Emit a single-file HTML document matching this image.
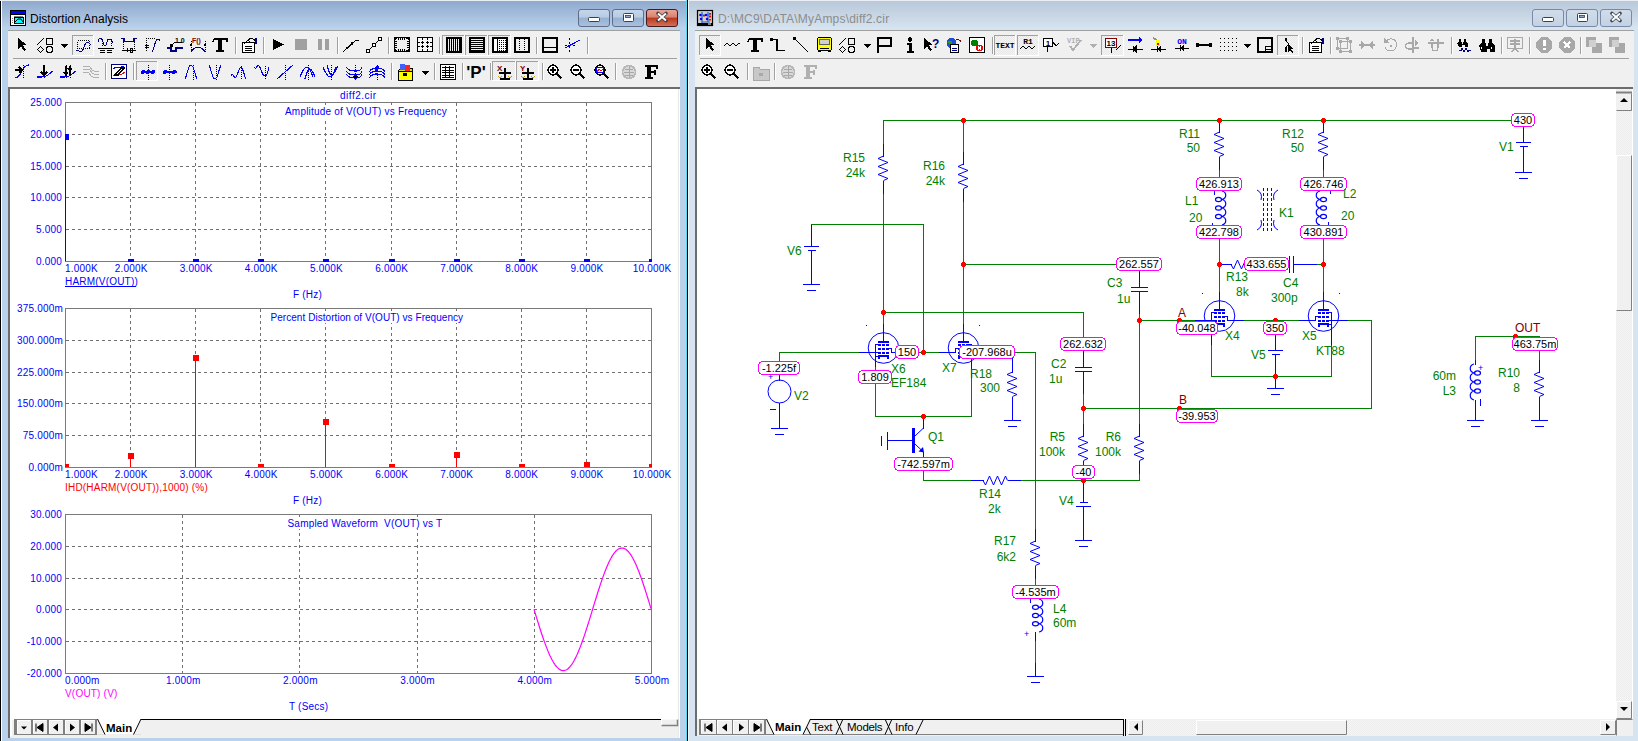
<!DOCTYPE html>
<html><head><meta charset="utf-8">
<style>
*{margin:0;padding:0;box-sizing:border-box}
html,body{width:1638px;height:741px;overflow:hidden;background:#fff;font-family:"Liberation Sans",sans-serif}
.abs{position:absolute}
#lw{left:0;top:0;width:688px;height:741px;background:linear-gradient(#f4f6fa 0px,#f4f6fa 1px,#8fa9cd 1px,#a4bcdc 14px,#bcd3ec 29px,#b9d1ea 30px,#b9d1ea 100%);border-left:1px solid #000}
#rw{left:688px;top:0;width:950px;height:741px;background:linear-gradient(#eaedf4 0px,#eaedf4 1px,#b9c9da 1px,#c6d4e3 14px,#d7e5f2 29px,#d6e4f2 30px,#d6e4f2 100%)}
.title{font-size:12.5px;color:#000;top:11px}
.tb{background:#f0f0f0;border-top:1px solid #a0a0a0}
.client{background:#fff;border-left:2px solid #6d6d6d;border-top:2px solid #6d6d6d}
.wbtn{width:32px;height:18px;border:1px solid #5f6e86;border-radius:3px;background:linear-gradient(#c5d6ec,#b7cbe4 45%,#98b0d0 50%,#a9c1df)}
</style></head><body>
<!-- LEFT WINDOW -->
<div id="lw" class="abs"></div>
<div class="abs" style="left:0;top:0;width:688px;height:1px;background:#e8eef5"></div>
<div class="abs" style="left:1px;top:1px;width:1px;height:740px;background:#fff"></div>
<div class="abs" style="left:686px;top:0;width:1px;height:741px;background:#5ad8f0"></div>
<div class="abs" style="left:687px;top:0;width:1px;height:741px;background:#000"></div>
<div class="abs wbtn" style="left:578px;top:9px"></div>
<div class="abs wbtn" style="left:612px;top:9px"></div>
<div class="abs wbtn" style="left:646px;top:9px;border-color:#4a1a1a;background:linear-gradient(#e9a594,#d9826e 45%,#b8371c 50%,#d3705a)"></div>
<div class="abs tb" style="left:8px;top:30px;width:672px;height:58px"></div>
<div class="abs" style="left:13px;top:58px;width:664px;height:1px;background:#a0a0a0"></div>
<div class="abs client" style="left:8px;top:87px;width:672px;height:651px"></div><div class="abs" style="left:678px;top:89px;width:1px;height:649px;background:#e8e8e8"></div>

<!-- RIGHT WINDOW -->
<div id="rw" class="abs"></div>
<div class="abs" style="left:688px;top:0;width:1px;height:741px;background:#f4f8fc"></div>
<div class="abs wbtn" style="left:1532px;top:9px;border-color:#7a8aa6;background:linear-gradient(#d0dcea,#c3d2e3)"></div>
<div class="abs wbtn" style="left:1566px;top:9px;border-color:#7a8aa6;background:linear-gradient(#d0dcea,#c3d2e3)"></div>
<div class="abs wbtn" style="left:1600px;top:9px;border-color:#7a8aa6;background:linear-gradient(#d0dcea,#c3d2e3)"></div>
<div class="abs tb" style="left:695px;top:30px;width:939px;height:58px"></div>
<div class="abs" style="left:700px;top:58px;width:929px;height:1px;background:#a0a0a0"></div>
<div class="abs client" style="left:695px;top:87px;width:938px;height:649px"></div>

<svg class="abs" style="left:0;top:0" width="1638" height="741" viewBox="0 0 1638 741" font-family="Liberation Sans" font-size="10">
<style>.g{stroke:#707070;stroke-dasharray:3 3;stroke-width:1}.fr{fill:none;stroke:#7a7a7a;stroke-width:1}</style>
<g fill="#0000ff" letter-spacing="0.2" font-size="10">
<line x1="130.5" y1="103" x2="130.5" y2="261" class="g"/>
<line x1="195.5" y1="103" x2="195.5" y2="261" class="g"/>
<line x1="260.5" y1="103" x2="260.5" y2="261" class="g"/>
<line x1="325.5" y1="103" x2="325.5" y2="261" class="g"/>
<line x1="391.5" y1="103" x2="391.5" y2="261" class="g"/>
<line x1="456.5" y1="103" x2="456.5" y2="261" class="g"/>
<line x1="521.5" y1="103" x2="521.5" y2="261" class="g"/>
<line x1="586.5" y1="103" x2="586.5" y2="261" class="g"/>
<line x1="66" y1="134.5" x2="651" y2="134.5" class="g"/>
<line x1="66" y1="166.5" x2="651" y2="166.5" class="g"/>
<line x1="66" y1="197.5" x2="651" y2="197.5" class="g"/>
<line x1="66" y1="229.5" x2="651" y2="229.5" class="g"/>
<rect x="65.5" y="102.5" width="586" height="159" class="fr"/>
<text x="62" y="106" text-anchor="end">25.000</text>
<text x="62" y="138" text-anchor="end">20.000</text>
<text x="62" y="170" text-anchor="end">15.000</text>
<text x="62" y="201" text-anchor="end">10.000</text>
<text x="62" y="233" text-anchor="end">5.000</text>
<text x="62" y="265" text-anchor="end">0.000</text>
<text x="65" y="272">1.000K</text>
<text x="131.1" y="272" text-anchor="middle">2.000K</text>
<text x="196.2" y="272" text-anchor="middle">3.000K</text>
<text x="261.3" y="272" text-anchor="middle">4.000K</text>
<text x="326.4" y="272" text-anchor="middle">5.000K</text>
<text x="391.6" y="272" text-anchor="middle">6.000K</text>
<text x="456.7" y="272" text-anchor="middle">7.000K</text>
<text x="521.8" y="272" text-anchor="middle">8.000K</text>
<text x="586.9" y="272" text-anchor="middle">9.000K</text>
<text x="652.0" y="272" text-anchor="middle">10.000K</text>
<text x="340" y="99" letter-spacing="0.5">diff2.cir</text>
<rect x="283" y="105" width="168" height="15" fill="#fff"/><text x="285" y="115">Amplitude of V(OUT) vs Frequency</text>
<text x="65" y="285">HARM(V(OUT))</text><line x1="65" y1="286.5" x2="136" y2="286.5" stroke="#00f"/>
<text x="293" y="298">F (Hz)</text>
<rect x="65" y="137" width="1" height="124" fill="#00f"/><rect x="65" y="134" width="4" height="6" fill="#00f"/>
<rect x="128" y="259" width="6" height="3" fill="#00f"/>
<rect x="193" y="259" width="6" height="3" fill="#00f"/>
<rect x="258" y="259" width="6" height="3" fill="#00f"/>
<rect x="323" y="259" width="6" height="3" fill="#00f"/>
<rect x="389" y="259" width="6" height="3" fill="#00f"/>
<rect x="454" y="259" width="6" height="3" fill="#00f"/>
<rect x="519" y="259" width="6" height="3" fill="#00f"/>
<rect x="584" y="259" width="6" height="3" fill="#00f"/>
<rect x="649" y="259" width="3" height="3" fill="#00f"/>
<line x1="130.5" y1="309" x2="130.5" y2="467" class="g"/>
<line x1="195.5" y1="309" x2="195.5" y2="467" class="g"/>
<line x1="260.5" y1="309" x2="260.5" y2="467" class="g"/>
<line x1="325.5" y1="309" x2="325.5" y2="467" class="g"/>
<line x1="391.5" y1="309" x2="391.5" y2="467" class="g"/>
<line x1="456.5" y1="309" x2="456.5" y2="467" class="g"/>
<line x1="521.5" y1="309" x2="521.5" y2="467" class="g"/>
<line x1="586.5" y1="309" x2="586.5" y2="467" class="g"/>
<line x1="66" y1="340.5" x2="651" y2="340.5" class="g"/>
<line x1="66" y1="372.5" x2="651" y2="372.5" class="g"/>
<line x1="66" y1="403.5" x2="651" y2="403.5" class="g"/>
<line x1="66" y1="435.5" x2="651" y2="435.5" class="g"/>
<rect x="65.5" y="308.5" width="586" height="159" class="fr"/>
<text x="63" y="312" text-anchor="end">375.000m</text>
<text x="63" y="344" text-anchor="end">300.000m</text>
<text x="63" y="376" text-anchor="end">225.000m</text>
<text x="63" y="407" text-anchor="end">150.000m</text>
<text x="63" y="439" text-anchor="end">75.000m</text>
<text x="63" y="471" text-anchor="end">0.000m</text>
<text x="65" y="478">1.000K</text>
<text x="131.1" y="478" text-anchor="middle">2.000K</text>
<text x="196.2" y="478" text-anchor="middle">3.000K</text>
<text x="261.3" y="478" text-anchor="middle">4.000K</text>
<text x="326.4" y="478" text-anchor="middle">5.000K</text>
<text x="391.6" y="478" text-anchor="middle">6.000K</text>
<text x="456.7" y="478" text-anchor="middle">7.000K</text>
<text x="521.8" y="478" text-anchor="middle">8.000K</text>
<text x="586.9" y="478" text-anchor="middle">9.000K</text>
<text x="652.0" y="478" text-anchor="middle">10.000K</text>
<rect x="268" y="311" width="201" height="12" fill="#fff"/><text x="270.5" y="321" letter-spacing="0.05">Percent Distortion of V(OUT) vs Frequency</text>
<text x="65" y="491" fill="#f00">IHD(HARM(V(OUT)),1000) (%)</text>
<text x="293" y="504">F (Hz)</text>
<rect x="65" y="464" width="4" height="3" fill="#f00"/>
<rect x="130" y="456" width="1" height="11" fill="#f00"/>
<rect x="128" y="453" width="6" height="6" fill="#f00"/>
<rect x="195" y="358" width="1" height="109" fill="#f00"/>
<rect x="193" y="355" width="6" height="6" fill="#f00"/>
<rect x="258" y="464" width="6" height="3" fill="#f00"/>
<rect x="325" y="422" width="1" height="45" fill="#f00"/>
<rect x="323" y="419" width="6" height="6" fill="#f00"/>
<rect x="389" y="464" width="6" height="3" fill="#f00"/>
<rect x="456" y="455" width="1" height="12" fill="#f00"/>
<rect x="454" y="452" width="6" height="6" fill="#f00"/>
<rect x="519" y="464" width="6" height="3" fill="#f00"/>
<rect x="584" y="462" width="6" height="5" fill="#f00"/>
<rect x="649" y="464" width="3" height="3" fill="#f00"/>
<line x1="182.5" y1="515" x2="182.5" y2="673" class="g"/>
<line x1="299.5" y1="515" x2="299.5" y2="673" class="g"/>
<line x1="417.5" y1="515" x2="417.5" y2="673" class="g"/>
<line x1="534.5" y1="515" x2="534.5" y2="673" class="g"/>
<line x1="66" y1="546.5" x2="651" y2="546.5" class="g"/>
<line x1="66" y1="578.5" x2="651" y2="578.5" class="g"/>
<line x1="66" y1="609.5" x2="651" y2="609.5" class="g"/>
<line x1="66" y1="641.5" x2="651" y2="641.5" class="g"/>
<rect x="65.5" y="514.5" width="586" height="159" class="fr"/>
<text x="62" y="518" text-anchor="end">30.000</text>
<text x="62" y="550" text-anchor="end">20.000</text>
<text x="62" y="582" text-anchor="end">10.000</text>
<text x="62" y="613" text-anchor="end">0.000</text>
<text x="62" y="645" text-anchor="end">-10.000</text>
<text x="62" y="677" text-anchor="end">-20.000</text>
<text x="65" y="684">0.000m</text>
<text x="183.2" y="684" text-anchor="middle">1.000m</text>
<text x="300.4" y="684" text-anchor="middle">2.000m</text>
<text x="417.6" y="684" text-anchor="middle">3.000m</text>
<text x="534.8" y="684" text-anchor="middle">4.000m</text>
<text x="652.0" y="684" text-anchor="middle">5.000m</text>
<rect x="285" y="517" width="160" height="12" fill="#fff"/><text x="287.5" y="527">Sampled Waveform&#160; V(OUT) vs T</text>
<text x="65" y="697" fill="#f0f">V(OUT) (V)</text>
<text x="289" y="710">T (Secs)</text>
<polyline points="534,609.3 535,612.6 536,615.9 537,619.1 538,622.3 539,625.5 540,628.7 541,631.8 542,634.8 543,637.7 544,640.6 545,643.4 546,646.1 547,648.6 548,651.1 549,653.5 550,655.7 551,657.7 552,659.7 553,661.5 554,663.1 555,664.6 556,666.0 557,667.1 558,668.1 559,669.0 560,669.6 561,670.1 562,670.5 563,670.6 564,670.6 565,670.3 566,670.0 567,669.4 568,668.7 569,667.8 570,666.7 571,665.5 572,664.1 573,662.5 574,660.8 575,658.9 576,656.9 577,654.8 578,652.5 579,650.1 580,647.6 581,645.0 582,642.3 583,639.5 584,636.6 585,633.6 586,630.5 587,627.4 588,624.3 589,621.1 590,617.8 591,614.6 592,611.3 593,608.0 594,604.7 595,601.4 596,598.2 597,595.0 598,591.8 599,588.7 600,585.6 601,582.6 602,579.7 603,576.9 604,574.1 605,571.5 606,569.0 607,566.5 608,564.2 609,562.1 610,560.1 611,558.2 612,556.4 613,554.8 614,553.4 615,552.1 616,551.0 617,550.1 618,549.3 619,548.7 620,548.3 621,548.1 622,548.0 623,548.1 624,548.4 625,548.8 626,549.5 627,550.3 628,551.2 629,552.4 630,553.7 631,555.2 632,556.8 633,558.5 634,560.5 635,562.5 636,564.7 637,567.0 638,569.5 639,572.0 640,574.7 641,577.4 642,580.3 643,583.2 644,586.2 645,589.3 646,592.4 647,595.6 648,598.8 649,602.1 650,605.4 651,608.6" fill="none" stroke="#f0f" stroke-width="1.2"/>
</g>
<g font-family="Liberation Sans"><rect x="883" y="120" width="629" height="1" fill="#008000"/>
<rect x="883" y="120" width="1" height="25" fill="#008000"/>
<rect x="963" y="120" width="1" height="33" fill="#008000"/>
<rect x="963" y="201" width="1" height="124" fill="#008000"/>
<rect x="883" y="193" width="1" height="132" fill="#008000"/>
<rect x="811" y="224" width="113" height="1" fill="#008000"/>
<rect x="923" y="224" width="1" height="129" fill="#008000"/>
<rect x="883" y="312" width="201" height="1" fill="#008000"/>
<rect x="1083" y="312" width="1" height="27" fill="#008000"/>
<rect x="779" y="352" width="81" height="1" fill="#008000"/>
<rect x="779" y="352" width="1" height="11" fill="#008000"/>
<rect x="779" y="374" width="1" height="7" fill="#008000"/>
<rect x="918" y="352" width="22" height="1" fill="#008000"/>
<rect x="1015" y="352" width="21" height="1" fill="#008000"/>
<rect x="1035" y="352" width="1" height="177" fill="#008000"/>
<rect x="875" y="367" width="1" height="50" fill="#008000"/>
<rect x="875" y="416" width="97" height="1" fill="#008000"/>
<rect x="971" y="369" width="1" height="48" fill="#008000"/>
<rect x="923" y="416" width="1" height="13" fill="#008000"/>
<rect x="923" y="470" width="1" height="11" fill="#008000"/>
<rect x="923" y="480" width="49" height="1" fill="#008000"/>
<rect x="1020" y="480" width="120" height="1" fill="#008000"/>
<rect x="963" y="264" width="154" height="1" fill="#008000"/>
<rect x="1083" y="392" width="1" height="33" fill="#008000"/>
<rect x="1083" y="408" width="289" height="1" fill="#008000"/>
<rect x="1139" y="313" width="1" height="112" fill="#008000"/>
<rect x="1139" y="473" width="1" height="8" fill="#008000"/>
<rect x="1139" y="320" width="57" height="1" fill="#008000"/>
<rect x="1243" y="320" width="57" height="1" fill="#008000"/>
<rect x="1347" y="320" width="25" height="1" fill="#008000"/>
<rect x="1371" y="320" width="1" height="89" fill="#008000"/>
<rect x="1211" y="345" width="1" height="32" fill="#008000"/>
<rect x="1211" y="376" width="121" height="1" fill="#008000"/>
<rect x="1331" y="344" width="1" height="33" fill="#008000"/>
<rect x="1219" y="120" width="1" height="1" fill="#008000"/>
<rect x="1219" y="168" width="1" height="11" fill="#008000"/>
<rect x="1219" y="238" width="1" height="59" fill="#008000"/>
<rect x="1323" y="168" width="1" height="11" fill="#008000"/>
<rect x="1323" y="238" width="1" height="59" fill="#008000"/>
<rect x="1316" y="264" width="8" height="1" fill="#008000"/>
<rect x="1035" y="578" width="1" height="9" fill="#008000"/>
<rect x="1035" y="640" width="1" height="24" fill="#008000"/>
<rect x="1475" y="336" width="65" height="1" fill="#008000"/>
<rect x="1475" y="336" width="1" height="25" fill="#008000"/>
<rect x="1539" y="350" width="1" height="11" fill="#008000"/>
<rect x="883" y="144" width="1" height="13" fill="#0000ff"/>
<polyline points="883.5,156 878,158.5 888,162.5 878,166.5 888,170.5 878,174.5 888,178.5 883.5,180.5" fill="none" stroke="#0000ff" stroke-width="1"/>
<rect x="883" y="181" width="1" height="13" fill="#0000ff"/>
<rect x="963" y="152" width="1" height="13" fill="#0000ff"/>
<polyline points="963.5,164 958,166.5 968,170.5 958,174.5 968,178.5 958,182.5 968,186.5 963.5,188.5" fill="none" stroke="#0000ff" stroke-width="1"/>
<rect x="963" y="189" width="1" height="13" fill="#0000ff"/>
<rect x="1219" y="120" width="1" height="13" fill="#0000ff"/>
<polyline points="1219.5,132 1214,134.5 1224,138.5 1214,142.5 1224,146.5 1214,150.5 1224,154.5 1219.5,156.5" fill="none" stroke="#0000ff" stroke-width="1"/>
<rect x="1219" y="157" width="1" height="13" fill="#0000ff"/>
<rect x="1323" y="120" width="1" height="13" fill="#0000ff"/>
<polyline points="1323.5,132 1318,134.5 1328,138.5 1318,142.5 1328,146.5 1318,150.5 1328,154.5 1323.5,156.5" fill="none" stroke="#0000ff" stroke-width="1"/>
<rect x="1323" y="157" width="1" height="13" fill="#0000ff"/>
<rect x="1012" y="360" width="1" height="13" fill="#0000ff"/>
<polyline points="1012.5,372 1007,374.5 1017,378.5 1007,382.5 1017,386.5 1007,390.5 1017,394.5 1012.5,396.5" fill="none" stroke="#0000ff" stroke-width="1"/>
<rect x="1012" y="397" width="1" height="13" fill="#0000ff"/>
<rect x="1012" y="358" width="1" height="3" fill="#0000ff"/>
<rect x="1012" y="408" width="1" height="13" fill="#0000ff"/>
<rect x="1004" y="420" width="17" height="1" fill="#0000ff"/>
<rect x="1008" y="426" width="9" height="1" fill="#0000ff"/>
<rect x="1083" y="424" width="1" height="13" fill="#0000ff"/>
<polyline points="1083.5,436 1078,438.5 1088,442.5 1078,446.5 1088,450.5 1078,454.5 1088,458.5 1083.5,460.5" fill="none" stroke="#0000ff" stroke-width="1"/>
<rect x="1083" y="461" width="1" height="13" fill="#0000ff"/>
<rect x="1139" y="424" width="1" height="13" fill="#0000ff"/>
<polyline points="1139.5,436 1134,438.5 1144,442.5 1134,446.5 1144,450.5 1134,454.5 1144,458.5 1139.5,460.5" fill="none" stroke="#0000ff" stroke-width="1"/>
<rect x="1139" y="461" width="1" height="13" fill="#0000ff"/>
<rect x="1035" y="529" width="1" height="13" fill="#0000ff"/>
<polyline points="1035.5,541 1030,543.5 1040,547.5 1030,551.5 1040,555.5 1030,559.5 1040,563.5 1035.5,565.5" fill="none" stroke="#0000ff" stroke-width="1"/>
<rect x="1035" y="566" width="1" height="13" fill="#0000ff"/>
<rect x="1539" y="360" width="1" height="13" fill="#0000ff"/>
<polyline points="1539.5,372 1534,374.5 1544,378.5 1534,382.5 1544,386.5 1534,390.5 1544,394.5 1539.5,396.5" fill="none" stroke="#0000ff" stroke-width="1"/>
<rect x="1539" y="397" width="1" height="13" fill="#0000ff"/>
<rect x="1539" y="409" width="1" height="12" fill="#0000ff"/>
<rect x="1531" y="420" width="17" height="1" fill="#0000ff"/>
<rect x="1535" y="426" width="9" height="1" fill="#0000ff"/>
<rect x="971" y="480" width="13" height="1" fill="#0000ff"/>
<polyline points="983,480.5 985.5,485 989.5,476 993.5,485 997.5,476 1001.5,485 1005.5,476 1007.5,480.5" fill="none" stroke="#0000ff" stroke-width="1"/>
<rect x="1008" y="480" width="13" height="1" fill="#0000ff"/>
<rect x="1219" y="264" width="13" height="1" fill="#0000ff"/>
<polyline points="1231,264.5 1233.5,269 1237.5,260 1241.5,269 1245.5,260 1249.5,269 1253.5,260 1255.5,264.5" fill="none" stroke="#0000ff" stroke-width="1"/>
<rect x="1256" y="264" width="13" height="1" fill="#0000ff"/>
<rect x="1139" y="270" width="1" height="18" fill="#0000ff"/>
<rect x="1131" y="287" width="17" height="1" fill="#0000ff"/>
<rect x="1131" y="291" width="17" height="1" fill="#0000ff"/>
<rect x="1139" y="291" width="1" height="23" fill="#0000ff"/>
<rect x="1083" y="350" width="1" height="18" fill="#0000ff"/>
<rect x="1075" y="367" width="17" height="1" fill="#0000ff"/>
<rect x="1075" y="371" width="17" height="1" fill="#0000ff"/>
<rect x="1083" y="371" width="1" height="23" fill="#0000ff"/>
<rect x="1289" y="256" width="1" height="17" fill="#0000ff"/>
<rect x="1293" y="256" width="1" height="17" fill="#0000ff"/>
<rect x="1293" y="264" width="24" height="1" fill="#0000ff"/>
<rect x="811" y="225" width="1" height="22" fill="#0000ff"/>
<rect x="804" y="246" width="15" height="1" fill="#0000ff"/>
<rect x="808" y="250" width="8" height="1" fill="#0000ff"/>
<rect x="811" y="250" width="1" height="35" fill="#0000ff"/>
<rect x="803" y="284" width="17" height="1" fill="#0000ff"/>
<rect x="807" y="290" width="9" height="1" fill="#0000ff"/>
<rect x="1523" y="126" width="1" height="17" fill="#0000ff"/>
<rect x="1516" y="142" width="15" height="1" fill="#0000ff"/>
<rect x="1520" y="146" width="8" height="1" fill="#0000ff"/>
<rect x="1523" y="146" width="1" height="27" fill="#0000ff"/>
<rect x="1515" y="172" width="17" height="1" fill="#0000ff"/>
<rect x="1519" y="178" width="9" height="1" fill="#0000ff"/>
<rect x="1275" y="334" width="1" height="17" fill="#0000ff"/>
<rect x="1268" y="350" width="15" height="1" fill="#0000ff"/>
<rect x="1272" y="354" width="8" height="1" fill="#0000ff"/>
<rect x="1275" y="354" width="1" height="35" fill="#0000ff"/>
<rect x="1267" y="388" width="17" height="1" fill="#0000ff"/>
<rect x="1271" y="394" width="9" height="1" fill="#0000ff"/>
<rect x="1083" y="480" width="1" height="23" fill="#0000ff"/>
<rect x="1080" y="502" width="8" height="1" fill="#0000ff"/>
<rect x="1076" y="506" width="15" height="1" fill="#0000ff"/>
<rect x="1083" y="506" width="1" height="35" fill="#0000ff"/>
<rect x="1075" y="540" width="17" height="1" fill="#0000ff"/>
<rect x="1079" y="546" width="9" height="1" fill="#0000ff"/>
<circle cx="779.5" cy="391.5" r="11.5" fill="none" stroke="#0000ff" stroke-width="1"/>
<rect x="779" y="374" width="1" height="7" fill="#0000ff"/>
<rect x="779" y="403" width="1" height="26" fill="#0000ff"/>
<rect x="771" y="428" width="17" height="1" fill="#0000ff"/>
<rect x="775" y="434" width="9" height="1" fill="#0000ff"/>
<text x="768" y="380" fill="#0000ff" font-size="9">+</text>
<rect x="770" y="409" width="6" height="1" fill="#0000ff"/>
<g transform=""><circle cx="883.5" cy="348" r="15.3" fill="none" stroke="#0000ff" stroke-width="1"/><rect x="883" y="324" width="1" height="18" fill="#0000ff"/><rect x="878" y="341" width="11" height="2" fill="#0000ff"/><rect x="878" y="344" width="3" height="2" fill="#0000ff"/><rect x="882" y="344" width="3" height="2" fill="#0000ff"/><rect x="886" y="344" width="3" height="2" fill="#0000ff"/><rect x="878" y="348" width="3" height="2" fill="#0000ff"/><rect x="882" y="348" width="3" height="2" fill="#0000ff"/><rect x="886" y="348" width="3" height="2" fill="#0000ff"/><rect x="878" y="352" width="3" height="2" fill="#0000ff"/><rect x="882" y="352" width="3" height="2" fill="#0000ff"/><rect x="886" y="352" width="3" height="2" fill="#0000ff"/><rect x="878" y="355" width="11" height="2" fill="#0000ff"/><rect x="878" y="357" width="2" height="2" fill="#0000ff"/><rect x="887" y="357" width="2" height="2" fill="#0000ff"/><rect x="875" y="344" width="1" height="23" fill="#0000ff"/><rect x="875" y="344" width="3" height="1" fill="#0000ff"/><rect x="875" y="356" width="3" height="1" fill="#0000ff"/><rect x="859" y="352" width="19" height="1" fill="#0000ff"/><rect x="889" y="348" width="3" height="1" fill="#0000ff"/><rect x="891" y="348" width="1" height="5" fill="#0000ff"/><rect x="891" y="352" width="17" height="1" fill="#0000ff"/></g>
<g transform="translate(1927,0) scale(-1,1)"><circle cx="963.5" cy="348" r="15.3" fill="none" stroke="#0000ff" stroke-width="1"/><rect x="963" y="324" width="1" height="18" fill="#0000ff"/><rect x="958" y="341" width="11" height="2" fill="#0000ff"/><rect x="958" y="344" width="3" height="2" fill="#0000ff"/><rect x="962" y="344" width="3" height="2" fill="#0000ff"/><rect x="966" y="344" width="3" height="2" fill="#0000ff"/><rect x="958" y="348" width="3" height="2" fill="#0000ff"/><rect x="962" y="348" width="3" height="2" fill="#0000ff"/><rect x="966" y="348" width="3" height="2" fill="#0000ff"/><rect x="958" y="352" width="3" height="2" fill="#0000ff"/><rect x="962" y="352" width="3" height="2" fill="#0000ff"/><rect x="966" y="352" width="3" height="2" fill="#0000ff"/><rect x="958" y="355" width="11" height="2" fill="#0000ff"/><rect x="958" y="357" width="2" height="2" fill="#0000ff"/><rect x="967" y="357" width="2" height="2" fill="#0000ff"/><rect x="955" y="344" width="1" height="25" fill="#0000ff"/><rect x="955" y="344" width="3" height="1" fill="#0000ff"/><rect x="955" y="356" width="3" height="1" fill="#0000ff"/><rect x="939" y="352" width="19" height="1" fill="#0000ff"/><rect x="969" y="348" width="3" height="1" fill="#0000ff"/><rect x="971" y="348" width="1" height="5" fill="#0000ff"/><rect x="971" y="352" width="17" height="1" fill="#0000ff"/></g>
<g transform=""><circle cx="1219.5" cy="316" r="15.3" fill="none" stroke="#0000ff" stroke-width="1"/><rect x="1219" y="292" width="1" height="18" fill="#0000ff"/><rect x="1214" y="309" width="11" height="2" fill="#0000ff"/><rect x="1214" y="312" width="3" height="2" fill="#0000ff"/><rect x="1218" y="312" width="3" height="2" fill="#0000ff"/><rect x="1222" y="312" width="3" height="2" fill="#0000ff"/><rect x="1214" y="316" width="3" height="2" fill="#0000ff"/><rect x="1218" y="316" width="3" height="2" fill="#0000ff"/><rect x="1222" y="316" width="3" height="2" fill="#0000ff"/><rect x="1214" y="320" width="3" height="2" fill="#0000ff"/><rect x="1218" y="320" width="3" height="2" fill="#0000ff"/><rect x="1222" y="320" width="3" height="2" fill="#0000ff"/><rect x="1214" y="323" width="11" height="2" fill="#0000ff"/><rect x="1214" y="325" width="2" height="2" fill="#0000ff"/><rect x="1223" y="325" width="2" height="2" fill="#0000ff"/><rect x="1211" y="312" width="1" height="33" fill="#0000ff"/><rect x="1211" y="312" width="3" height="1" fill="#0000ff"/><rect x="1211" y="324" width="3" height="1" fill="#0000ff"/><rect x="1195" y="320" width="19" height="1" fill="#0000ff"/><rect x="1225" y="316" width="3" height="1" fill="#0000ff"/><rect x="1227" y="316" width="1" height="5" fill="#0000ff"/><rect x="1227" y="320" width="17" height="1" fill="#0000ff"/></g>
<g transform="translate(2647,0) scale(-1,1)"><circle cx="1323.5" cy="316" r="15.3" fill="none" stroke="#0000ff" stroke-width="1"/><rect x="1323" y="292" width="1" height="18" fill="#0000ff"/><rect x="1318" y="309" width="11" height="2" fill="#0000ff"/><rect x="1318" y="312" width="3" height="2" fill="#0000ff"/><rect x="1322" y="312" width="3" height="2" fill="#0000ff"/><rect x="1326" y="312" width="3" height="2" fill="#0000ff"/><rect x="1318" y="316" width="3" height="2" fill="#0000ff"/><rect x="1322" y="316" width="3" height="2" fill="#0000ff"/><rect x="1326" y="316" width="3" height="2" fill="#0000ff"/><rect x="1318" y="320" width="3" height="2" fill="#0000ff"/><rect x="1322" y="320" width="3" height="2" fill="#0000ff"/><rect x="1326" y="320" width="3" height="2" fill="#0000ff"/><rect x="1318" y="323" width="11" height="2" fill="#0000ff"/><rect x="1318" y="325" width="2" height="2" fill="#0000ff"/><rect x="1327" y="325" width="2" height="2" fill="#0000ff"/><rect x="1315" y="312" width="1" height="33" fill="#0000ff"/><rect x="1315" y="312" width="3" height="1" fill="#0000ff"/><rect x="1315" y="324" width="3" height="1" fill="#0000ff"/><rect x="1299" y="320" width="19" height="1" fill="#0000ff"/><rect x="1329" y="316" width="3" height="1" fill="#0000ff"/><rect x="1331" y="316" width="1" height="5" fill="#0000ff"/><rect x="1331" y="320" width="17" height="1" fill="#0000ff"/></g>
<rect x="866" y="325" width="1" height="1" fill="#0000ff"/>
<rect x="979" y="325" width="1" height="1" fill="#0000ff"/>
<rect x="1202" y="293" width="1" height="1" fill="#0000ff"/>
<rect x="1339" y="293" width="1" height="1" fill="#0000ff"/>
<rect x="912" y="428" width="3" height="25" fill="#0000ff"/>
<rect x="888" y="440" width="25" height="1" fill="#0000ff"/>
<rect x="887" y="432" width="1" height="18" fill="#0000ff"/>
<rect x="881" y="436" width="1" height="10" fill="#0000ff"/>
<rect x="923" y="417" width="1" height="12" fill="#0000ff"/>
<line x1="915" y1="436" x2="923.5" y2="428" stroke="#0000ff"/>
<line x1="915" y1="444" x2="923.5" y2="452" stroke="#0000ff"/>
<path d="M918.5,451.5 L924,452.5 L923,447 Z" fill="#0000ff"/>
<rect x="923" y="452" width="1" height="6" fill="#0000ff"/>
<path d="M1222,191 C1227,192.275 1227,198.225 1222,199.5 C1227,200.775 1227,206.725 1222,208.0 C1227,209.275 1227,215.225 1222,216.5 C1227,217.775 1227,223.725 1222,225.0" fill="none" stroke="#0000ff" stroke-width="1.2"/>
<ellipse cx="1218.5" cy="199.5" rx="3" ry="2.2" fill="none" stroke="#0000ff" stroke-width="1.2"/>
<ellipse cx="1218.5" cy="208.0" rx="3" ry="2.2" fill="none" stroke="#0000ff" stroke-width="1.2"/>
<ellipse cx="1218.5" cy="216.5" rx="3" ry="2.2" fill="none" stroke="#0000ff" stroke-width="1.2"/>
<rect x="1214" y="191" width="1" height="4" fill="#0000ff"/>
<rect x="1212" y="223" width="1" height="3" fill="#0000ff"/>
<path d="M1320,191 C1315,192.275 1315,198.225 1320,199.5 C1315,200.775 1315,206.725 1320,208.0 C1315,209.275 1315,215.225 1320,216.5 C1315,217.775 1315,223.725 1320,225.0" fill="none" stroke="#0000ff" stroke-width="1.2"/>
<ellipse cx="1323.5" cy="199.5" rx="3" ry="2.2" fill="none" stroke="#0000ff" stroke-width="1.2"/>
<ellipse cx="1323.5" cy="208.0" rx="3" ry="2.2" fill="none" stroke="#0000ff" stroke-width="1.2"/>
<ellipse cx="1323.5" cy="216.5" rx="3" ry="2.2" fill="none" stroke="#0000ff" stroke-width="1.2"/>
<rect x="1330" y="191" width="1" height="3" fill="#0000ff"/>
<rect x="1328" y="222" width="1" height="4" fill="#0000ff"/>
<path d="M1039,599 C1044,600.2375 1044,606.0125 1039,607.25 C1044,608.4875 1044,614.2625 1039,615.5 C1044,616.7375 1044,622.5125 1039,623.75 C1044,624.9875 1044,630.7625 1039,632.0" fill="none" stroke="#0000ff" stroke-width="1.2"/>
<ellipse cx="1035.5" cy="607.25" rx="3" ry="2.2" fill="none" stroke="#0000ff" stroke-width="1.2"/>
<ellipse cx="1035.5" cy="615.5" rx="3" ry="2.2" fill="none" stroke="#0000ff" stroke-width="1.2"/>
<ellipse cx="1035.5" cy="623.75" rx="3" ry="2.2" fill="none" stroke="#0000ff" stroke-width="1.2"/>
<rect x="1035" y="632" width="1" height="9" fill="#0000ff"/>
<text x="1024" y="637" fill="#0000ff" font-size="9">+</text>
<rect x="1030" y="599" width="1" height="4" fill="#0000ff"/>
<path d="M1474,364 C1469,365.35 1469,371.65 1474,373.0 C1469,374.35 1469,380.65 1474,382.0 C1469,383.35 1469,389.65 1474,391.0 C1469,392.35 1469,398.65 1474,400.0" fill="none" stroke="#0000ff" stroke-width="1.2"/>
<ellipse cx="1477.5" cy="373.0" rx="3" ry="2.2" fill="none" stroke="#0000ff" stroke-width="1.2"/>
<ellipse cx="1477.5" cy="382.0" rx="3" ry="2.2" fill="none" stroke="#0000ff" stroke-width="1.2"/>
<ellipse cx="1477.5" cy="391.0" rx="3" ry="2.2" fill="none" stroke="#0000ff" stroke-width="1.2"/>
<rect x="1475" y="360" width="1" height="5" fill="#0000ff"/>
<rect x="1475" y="400" width="1" height="21" fill="#0000ff"/>
<rect x="1467" y="420" width="17" height="1" fill="#0000ff"/>
<rect x="1471" y="426" width="9" height="1" fill="#0000ff"/>
<text x="1478" y="371" fill="#0000ff" font-size="9">+</text>
<rect x="1480" y="399" width="1" height="7" fill="#0000ff"/>
<rect x="1035" y="663" width="1" height="14" fill="#0000ff"/>
<rect x="1027" y="676" width="17" height="1" fill="#0000ff"/>
<rect x="1031" y="682" width="9" height="1" fill="#0000ff"/>
<line x1="1263.5" y1="188" x2="1263.5" y2="232" stroke="#0000ff" stroke-dasharray="3 2"/>
<line x1="1267.5" y1="188" x2="1267.5" y2="232" stroke="#0000ff" stroke-dasharray="3 2"/>
<line x1="1271.5" y1="188" x2="1271.5" y2="232" stroke="#0000ff" stroke-dasharray="3 2"/>
<path d="M1257,190 Q1263,193 1261,200 M1257,230 Q1263,227 1261,220 M1278,190 Q1272,193 1274,200 M1278,230 Q1272,227 1274,220" fill="none" stroke="#0000ff"/>
<path d="M962,118h3v1h1v3h-1v1h-3v-1h-1v-3h1z" fill="#ff0000"/>
<path d="M1218,118h3v1h1v3h-1v1h-3v-1h-1v-3h1z" fill="#ff0000"/>
<path d="M1322,118h3v1h1v3h-1v1h-3v-1h-1v-3h1z" fill="#ff0000"/>
<path d="M962,262h3v1h1v3h-1v1h-3v-1h-1v-3h1z" fill="#ff0000"/>
<path d="M882,310h3v1h1v3h-1v1h-3v-1h-1v-3h1z" fill="#ff0000"/>
<path d="M922,350h3v1h1v3h-1v1h-3v-1h-1v-3h1z" fill="#ff0000"/>
<path d="M922,414h3v1h1v3h-1v1h-3v-1h-1v-3h1z" fill="#ff0000"/>
<path d="M1138,318h3v1h1v3h-1v1h-3v-1h-1v-3h1z" fill="#ff0000"/>
<path d="M1082,406h3v1h1v3h-1v1h-3v-1h-1v-3h1z" fill="#ff0000"/>
<path d="M1082,478h3v1h1v3h-1v1h-3v-1h-1v-3h1z" fill="#ff0000"/>
<path d="M1218,262h3v1h1v3h-1v1h-3v-1h-1v-3h1z" fill="#ff0000"/>
<path d="M1322,262h3v1h1v3h-1v1h-3v-1h-1v-3h1z" fill="#ff0000"/>
<path d="M1274,374h3v1h1v3h-1v1h-3v-1h-1v-3h1z" fill="#ff0000"/>
<path d="M1274,318h3v1h1v3h-1v1h-3v-1h-1v-3h1z" fill="#ff0000"/>
<path d="M1178,318h3v1h1v3h-1v1h-3v-1h-1v-3h1z" fill="#ff0000"/>
<path d="M1178,406h3v1h1v3h-1v1h-3v-1h-1v-3h1z" fill="#ff0000"/>
<path d="M1514,334h3v1h1v3h-1v1h-3v-1h-1v-3h1z" fill="#ff0000"/>
<rect x="759" y="362" width="40" height="12" fill="#fff"/><rect x="761" y="361" width="36" height="1" fill="#ff00ff"/><rect x="761" y="374" width="36" height="1" fill="#ff00ff"/><rect x="758" y="364" width="1" height="8" fill="#ff00ff"/><rect x="799" y="364" width="1" height="8" fill="#ff00ff"/><rect x="759" y="362" width="1" height="1" fill="#ff00ff"/><rect x="760" y="362" width="1" height="1" fill="#ff00ff"/><rect x="759" y="363" width="1" height="1" fill="#ff00ff"/><rect x="798" y="362" width="1" height="1" fill="#ff00ff"/><rect x="797" y="362" width="1" height="1" fill="#ff00ff"/><rect x="798" y="363" width="1" height="1" fill="#ff00ff"/><rect x="759" y="373" width="1" height="1" fill="#ff00ff"/><rect x="760" y="373" width="1" height="1" fill="#ff00ff"/><rect x="759" y="372" width="1" height="1" fill="#ff00ff"/><rect x="798" y="373" width="1" height="1" fill="#ff00ff"/><rect x="797" y="373" width="1" height="1" fill="#ff00ff"/><rect x="798" y="372" width="1" height="1" fill="#ff00ff"/>
<text x="779.0" y="372" fill="#000" font-size="11" text-anchor="middle">-1.225f</text>
<rect x="896" y="346" width="22" height="12" fill="#fff"/><rect x="898" y="345" width="18" height="1" fill="#ff00ff"/><rect x="898" y="358" width="18" height="1" fill="#ff00ff"/><rect x="895" y="348" width="1" height="8" fill="#ff00ff"/><rect x="918" y="348" width="1" height="8" fill="#ff00ff"/><rect x="896" y="346" width="1" height="1" fill="#ff00ff"/><rect x="897" y="346" width="1" height="1" fill="#ff00ff"/><rect x="896" y="347" width="1" height="1" fill="#ff00ff"/><rect x="917" y="346" width="1" height="1" fill="#ff00ff"/><rect x="916" y="346" width="1" height="1" fill="#ff00ff"/><rect x="917" y="347" width="1" height="1" fill="#ff00ff"/><rect x="896" y="357" width="1" height="1" fill="#ff00ff"/><rect x="897" y="357" width="1" height="1" fill="#ff00ff"/><rect x="896" y="356" width="1" height="1" fill="#ff00ff"/><rect x="917" y="357" width="1" height="1" fill="#ff00ff"/><rect x="916" y="357" width="1" height="1" fill="#ff00ff"/><rect x="917" y="356" width="1" height="1" fill="#ff00ff"/>
<text x="907.0" y="356" fill="#000" font-size="11" text-anchor="middle">150</text>
<rect x="859" y="371" width="32" height="12" fill="#fff"/><rect x="861" y="370" width="28" height="1" fill="#ff00ff"/><rect x="861" y="383" width="28" height="1" fill="#ff00ff"/><rect x="858" y="373" width="1" height="8" fill="#ff00ff"/><rect x="891" y="373" width="1" height="8" fill="#ff00ff"/><rect x="859" y="371" width="1" height="1" fill="#ff00ff"/><rect x="860" y="371" width="1" height="1" fill="#ff00ff"/><rect x="859" y="372" width="1" height="1" fill="#ff00ff"/><rect x="890" y="371" width="1" height="1" fill="#ff00ff"/><rect x="889" y="371" width="1" height="1" fill="#ff00ff"/><rect x="890" y="372" width="1" height="1" fill="#ff00ff"/><rect x="859" y="382" width="1" height="1" fill="#ff00ff"/><rect x="860" y="382" width="1" height="1" fill="#ff00ff"/><rect x="859" y="381" width="1" height="1" fill="#ff00ff"/><rect x="890" y="382" width="1" height="1" fill="#ff00ff"/><rect x="889" y="382" width="1" height="1" fill="#ff00ff"/><rect x="890" y="381" width="1" height="1" fill="#ff00ff"/>
<text x="875.0" y="381" fill="#000" font-size="11" text-anchor="middle">1.809</text>
<rect x="960" y="346" width="54" height="12" fill="#fff"/><rect x="962" y="345" width="50" height="1" fill="#ff00ff"/><rect x="962" y="358" width="50" height="1" fill="#ff00ff"/><rect x="959" y="348" width="1" height="8" fill="#ff00ff"/><rect x="1014" y="348" width="1" height="8" fill="#ff00ff"/><rect x="960" y="346" width="1" height="1" fill="#ff00ff"/><rect x="961" y="346" width="1" height="1" fill="#ff00ff"/><rect x="960" y="347" width="1" height="1" fill="#ff00ff"/><rect x="1013" y="346" width="1" height="1" fill="#ff00ff"/><rect x="1012" y="346" width="1" height="1" fill="#ff00ff"/><rect x="1013" y="347" width="1" height="1" fill="#ff00ff"/><rect x="960" y="357" width="1" height="1" fill="#ff00ff"/><rect x="961" y="357" width="1" height="1" fill="#ff00ff"/><rect x="960" y="356" width="1" height="1" fill="#ff00ff"/><rect x="1013" y="357" width="1" height="1" fill="#ff00ff"/><rect x="1012" y="357" width="1" height="1" fill="#ff00ff"/><rect x="1013" y="356" width="1" height="1" fill="#ff00ff"/>
<text x="987.0" y="356" fill="#000" font-size="11" text-anchor="middle">-207.968u</text>
<rect x="895" y="458" width="57" height="12" fill="#fff"/><rect x="897" y="457" width="53" height="1" fill="#ff00ff"/><rect x="897" y="470" width="53" height="1" fill="#ff00ff"/><rect x="894" y="460" width="1" height="8" fill="#ff00ff"/><rect x="952" y="460" width="1" height="8" fill="#ff00ff"/><rect x="895" y="458" width="1" height="1" fill="#ff00ff"/><rect x="896" y="458" width="1" height="1" fill="#ff00ff"/><rect x="895" y="459" width="1" height="1" fill="#ff00ff"/><rect x="951" y="458" width="1" height="1" fill="#ff00ff"/><rect x="950" y="458" width="1" height="1" fill="#ff00ff"/><rect x="951" y="459" width="1" height="1" fill="#ff00ff"/><rect x="895" y="469" width="1" height="1" fill="#ff00ff"/><rect x="896" y="469" width="1" height="1" fill="#ff00ff"/><rect x="895" y="468" width="1" height="1" fill="#ff00ff"/><rect x="951" y="469" width="1" height="1" fill="#ff00ff"/><rect x="950" y="469" width="1" height="1" fill="#ff00ff"/><rect x="951" y="468" width="1" height="1" fill="#ff00ff"/>
<text x="923.5" y="468" fill="#000" font-size="11" text-anchor="middle">-742.597m</text>
<rect x="1117" y="258" width="44" height="12" fill="#fff"/><rect x="1119" y="257" width="40" height="1" fill="#ff00ff"/><rect x="1119" y="270" width="40" height="1" fill="#ff00ff"/><rect x="1116" y="260" width="1" height="8" fill="#ff00ff"/><rect x="1161" y="260" width="1" height="8" fill="#ff00ff"/><rect x="1117" y="258" width="1" height="1" fill="#ff00ff"/><rect x="1118" y="258" width="1" height="1" fill="#ff00ff"/><rect x="1117" y="259" width="1" height="1" fill="#ff00ff"/><rect x="1160" y="258" width="1" height="1" fill="#ff00ff"/><rect x="1159" y="258" width="1" height="1" fill="#ff00ff"/><rect x="1160" y="259" width="1" height="1" fill="#ff00ff"/><rect x="1117" y="269" width="1" height="1" fill="#ff00ff"/><rect x="1118" y="269" width="1" height="1" fill="#ff00ff"/><rect x="1117" y="268" width="1" height="1" fill="#ff00ff"/><rect x="1160" y="269" width="1" height="1" fill="#ff00ff"/><rect x="1159" y="269" width="1" height="1" fill="#ff00ff"/><rect x="1160" y="268" width="1" height="1" fill="#ff00ff"/>
<text x="1139.0" y="268" fill="#000" font-size="11" text-anchor="middle">262.557</text>
<rect x="1061" y="338" width="44" height="12" fill="#fff"/><rect x="1063" y="337" width="40" height="1" fill="#ff00ff"/><rect x="1063" y="350" width="40" height="1" fill="#ff00ff"/><rect x="1060" y="340" width="1" height="8" fill="#ff00ff"/><rect x="1105" y="340" width="1" height="8" fill="#ff00ff"/><rect x="1061" y="338" width="1" height="1" fill="#ff00ff"/><rect x="1062" y="338" width="1" height="1" fill="#ff00ff"/><rect x="1061" y="339" width="1" height="1" fill="#ff00ff"/><rect x="1104" y="338" width="1" height="1" fill="#ff00ff"/><rect x="1103" y="338" width="1" height="1" fill="#ff00ff"/><rect x="1104" y="339" width="1" height="1" fill="#ff00ff"/><rect x="1061" y="349" width="1" height="1" fill="#ff00ff"/><rect x="1062" y="349" width="1" height="1" fill="#ff00ff"/><rect x="1061" y="348" width="1" height="1" fill="#ff00ff"/><rect x="1104" y="349" width="1" height="1" fill="#ff00ff"/><rect x="1103" y="349" width="1" height="1" fill="#ff00ff"/><rect x="1104" y="348" width="1" height="1" fill="#ff00ff"/>
<text x="1083.0" y="348" fill="#000" font-size="11" text-anchor="middle">262.632</text>
<rect x="1073" y="466" width="21" height="12" fill="#fff"/><rect x="1075" y="465" width="17" height="1" fill="#ff00ff"/><rect x="1075" y="478" width="17" height="1" fill="#ff00ff"/><rect x="1072" y="468" width="1" height="8" fill="#ff00ff"/><rect x="1094" y="468" width="1" height="8" fill="#ff00ff"/><rect x="1073" y="466" width="1" height="1" fill="#ff00ff"/><rect x="1074" y="466" width="1" height="1" fill="#ff00ff"/><rect x="1073" y="467" width="1" height="1" fill="#ff00ff"/><rect x="1093" y="466" width="1" height="1" fill="#ff00ff"/><rect x="1092" y="466" width="1" height="1" fill="#ff00ff"/><rect x="1093" y="467" width="1" height="1" fill="#ff00ff"/><rect x="1073" y="477" width="1" height="1" fill="#ff00ff"/><rect x="1074" y="477" width="1" height="1" fill="#ff00ff"/><rect x="1073" y="476" width="1" height="1" fill="#ff00ff"/><rect x="1093" y="477" width="1" height="1" fill="#ff00ff"/><rect x="1092" y="477" width="1" height="1" fill="#ff00ff"/><rect x="1093" y="476" width="1" height="1" fill="#ff00ff"/>
<text x="1083.5" y="476" fill="#000" font-size="11" text-anchor="middle">-40</text>
<rect x="1013" y="586" width="45" height="12" fill="#fff"/><rect x="1015" y="585" width="41" height="1" fill="#ff00ff"/><rect x="1015" y="598" width="41" height="1" fill="#ff00ff"/><rect x="1012" y="588" width="1" height="8" fill="#ff00ff"/><rect x="1058" y="588" width="1" height="8" fill="#ff00ff"/><rect x="1013" y="586" width="1" height="1" fill="#ff00ff"/><rect x="1014" y="586" width="1" height="1" fill="#ff00ff"/><rect x="1013" y="587" width="1" height="1" fill="#ff00ff"/><rect x="1057" y="586" width="1" height="1" fill="#ff00ff"/><rect x="1056" y="586" width="1" height="1" fill="#ff00ff"/><rect x="1057" y="587" width="1" height="1" fill="#ff00ff"/><rect x="1013" y="597" width="1" height="1" fill="#ff00ff"/><rect x="1014" y="597" width="1" height="1" fill="#ff00ff"/><rect x="1013" y="596" width="1" height="1" fill="#ff00ff"/><rect x="1057" y="597" width="1" height="1" fill="#ff00ff"/><rect x="1056" y="597" width="1" height="1" fill="#ff00ff"/><rect x="1057" y="596" width="1" height="1" fill="#ff00ff"/>
<text x="1035.5" y="596" fill="#000" font-size="11" text-anchor="middle">-4.535m</text>
<rect x="1197" y="178" width="44" height="12" fill="#fff"/><rect x="1199" y="177" width="40" height="1" fill="#ff00ff"/><rect x="1199" y="190" width="40" height="1" fill="#ff00ff"/><rect x="1196" y="180" width="1" height="8" fill="#ff00ff"/><rect x="1241" y="180" width="1" height="8" fill="#ff00ff"/><rect x="1197" y="178" width="1" height="1" fill="#ff00ff"/><rect x="1198" y="178" width="1" height="1" fill="#ff00ff"/><rect x="1197" y="179" width="1" height="1" fill="#ff00ff"/><rect x="1240" y="178" width="1" height="1" fill="#ff00ff"/><rect x="1239" y="178" width="1" height="1" fill="#ff00ff"/><rect x="1240" y="179" width="1" height="1" fill="#ff00ff"/><rect x="1197" y="189" width="1" height="1" fill="#ff00ff"/><rect x="1198" y="189" width="1" height="1" fill="#ff00ff"/><rect x="1197" y="188" width="1" height="1" fill="#ff00ff"/><rect x="1240" y="189" width="1" height="1" fill="#ff00ff"/><rect x="1239" y="189" width="1" height="1" fill="#ff00ff"/><rect x="1240" y="188" width="1" height="1" fill="#ff00ff"/>
<text x="1219.0" y="188" fill="#000" font-size="11" text-anchor="middle">426.913</text>
<rect x="1197" y="226" width="44" height="12" fill="#fff"/><rect x="1199" y="225" width="40" height="1" fill="#ff00ff"/><rect x="1199" y="238" width="40" height="1" fill="#ff00ff"/><rect x="1196" y="228" width="1" height="8" fill="#ff00ff"/><rect x="1241" y="228" width="1" height="8" fill="#ff00ff"/><rect x="1197" y="226" width="1" height="1" fill="#ff00ff"/><rect x="1198" y="226" width="1" height="1" fill="#ff00ff"/><rect x="1197" y="227" width="1" height="1" fill="#ff00ff"/><rect x="1240" y="226" width="1" height="1" fill="#ff00ff"/><rect x="1239" y="226" width="1" height="1" fill="#ff00ff"/><rect x="1240" y="227" width="1" height="1" fill="#ff00ff"/><rect x="1197" y="237" width="1" height="1" fill="#ff00ff"/><rect x="1198" y="237" width="1" height="1" fill="#ff00ff"/><rect x="1197" y="236" width="1" height="1" fill="#ff00ff"/><rect x="1240" y="237" width="1" height="1" fill="#ff00ff"/><rect x="1239" y="237" width="1" height="1" fill="#ff00ff"/><rect x="1240" y="236" width="1" height="1" fill="#ff00ff"/>
<text x="1219.0" y="236" fill="#000" font-size="11" text-anchor="middle">422.798</text>
<rect x="1301" y="178" width="45" height="12" fill="#fff"/><rect x="1303" y="177" width="41" height="1" fill="#ff00ff"/><rect x="1303" y="190" width="41" height="1" fill="#ff00ff"/><rect x="1300" y="180" width="1" height="8" fill="#ff00ff"/><rect x="1346" y="180" width="1" height="8" fill="#ff00ff"/><rect x="1301" y="178" width="1" height="1" fill="#ff00ff"/><rect x="1302" y="178" width="1" height="1" fill="#ff00ff"/><rect x="1301" y="179" width="1" height="1" fill="#ff00ff"/><rect x="1345" y="178" width="1" height="1" fill="#ff00ff"/><rect x="1344" y="178" width="1" height="1" fill="#ff00ff"/><rect x="1345" y="179" width="1" height="1" fill="#ff00ff"/><rect x="1301" y="189" width="1" height="1" fill="#ff00ff"/><rect x="1302" y="189" width="1" height="1" fill="#ff00ff"/><rect x="1301" y="188" width="1" height="1" fill="#ff00ff"/><rect x="1345" y="189" width="1" height="1" fill="#ff00ff"/><rect x="1344" y="189" width="1" height="1" fill="#ff00ff"/><rect x="1345" y="188" width="1" height="1" fill="#ff00ff"/>
<text x="1323.5" y="188" fill="#000" font-size="11" text-anchor="middle">426.746</text>
<rect x="1301" y="226" width="45" height="12" fill="#fff"/><rect x="1303" y="225" width="41" height="1" fill="#ff00ff"/><rect x="1303" y="238" width="41" height="1" fill="#ff00ff"/><rect x="1300" y="228" width="1" height="8" fill="#ff00ff"/><rect x="1346" y="228" width="1" height="8" fill="#ff00ff"/><rect x="1301" y="226" width="1" height="1" fill="#ff00ff"/><rect x="1302" y="226" width="1" height="1" fill="#ff00ff"/><rect x="1301" y="227" width="1" height="1" fill="#ff00ff"/><rect x="1345" y="226" width="1" height="1" fill="#ff00ff"/><rect x="1344" y="226" width="1" height="1" fill="#ff00ff"/><rect x="1345" y="227" width="1" height="1" fill="#ff00ff"/><rect x="1301" y="237" width="1" height="1" fill="#ff00ff"/><rect x="1302" y="237" width="1" height="1" fill="#ff00ff"/><rect x="1301" y="236" width="1" height="1" fill="#ff00ff"/><rect x="1345" y="237" width="1" height="1" fill="#ff00ff"/><rect x="1344" y="237" width="1" height="1" fill="#ff00ff"/><rect x="1345" y="236" width="1" height="1" fill="#ff00ff"/>
<text x="1323.5" y="236" fill="#000" font-size="11" text-anchor="middle">430.891</text>
<rect x="1245" y="258" width="43" height="12" fill="#fff"/><rect x="1247" y="257" width="39" height="1" fill="#ff00ff"/><rect x="1247" y="270" width="39" height="1" fill="#ff00ff"/><rect x="1244" y="260" width="1" height="8" fill="#ff00ff"/><rect x="1288" y="260" width="1" height="8" fill="#ff00ff"/><rect x="1245" y="258" width="1" height="1" fill="#ff00ff"/><rect x="1246" y="258" width="1" height="1" fill="#ff00ff"/><rect x="1245" y="259" width="1" height="1" fill="#ff00ff"/><rect x="1287" y="258" width="1" height="1" fill="#ff00ff"/><rect x="1286" y="258" width="1" height="1" fill="#ff00ff"/><rect x="1287" y="259" width="1" height="1" fill="#ff00ff"/><rect x="1245" y="269" width="1" height="1" fill="#ff00ff"/><rect x="1246" y="269" width="1" height="1" fill="#ff00ff"/><rect x="1245" y="268" width="1" height="1" fill="#ff00ff"/><rect x="1287" y="269" width="1" height="1" fill="#ff00ff"/><rect x="1286" y="269" width="1" height="1" fill="#ff00ff"/><rect x="1287" y="268" width="1" height="1" fill="#ff00ff"/>
<text x="1266.5" y="268" fill="#000" font-size="11" text-anchor="middle">433.655</text>
<rect x="1177" y="322" width="40" height="12" fill="#fff"/><rect x="1179" y="321" width="36" height="1" fill="#ff00ff"/><rect x="1179" y="334" width="36" height="1" fill="#ff00ff"/><rect x="1176" y="324" width="1" height="8" fill="#ff00ff"/><rect x="1217" y="324" width="1" height="8" fill="#ff00ff"/><rect x="1177" y="322" width="1" height="1" fill="#ff00ff"/><rect x="1178" y="322" width="1" height="1" fill="#ff00ff"/><rect x="1177" y="323" width="1" height="1" fill="#ff00ff"/><rect x="1216" y="322" width="1" height="1" fill="#ff00ff"/><rect x="1215" y="322" width="1" height="1" fill="#ff00ff"/><rect x="1216" y="323" width="1" height="1" fill="#ff00ff"/><rect x="1177" y="333" width="1" height="1" fill="#ff00ff"/><rect x="1178" y="333" width="1" height="1" fill="#ff00ff"/><rect x="1177" y="332" width="1" height="1" fill="#ff00ff"/><rect x="1216" y="333" width="1" height="1" fill="#ff00ff"/><rect x="1215" y="333" width="1" height="1" fill="#ff00ff"/><rect x="1216" y="332" width="1" height="1" fill="#ff00ff"/>
<text x="1197.0" y="332" fill="#000" font-size="11" text-anchor="middle">-40.048</text>
<rect x="1264" y="322" width="22" height="12" fill="#fff"/><rect x="1266" y="321" width="18" height="1" fill="#ff00ff"/><rect x="1266" y="334" width="18" height="1" fill="#ff00ff"/><rect x="1263" y="324" width="1" height="8" fill="#ff00ff"/><rect x="1286" y="324" width="1" height="8" fill="#ff00ff"/><rect x="1264" y="322" width="1" height="1" fill="#ff00ff"/><rect x="1265" y="322" width="1" height="1" fill="#ff00ff"/><rect x="1264" y="323" width="1" height="1" fill="#ff00ff"/><rect x="1285" y="322" width="1" height="1" fill="#ff00ff"/><rect x="1284" y="322" width="1" height="1" fill="#ff00ff"/><rect x="1285" y="323" width="1" height="1" fill="#ff00ff"/><rect x="1264" y="333" width="1" height="1" fill="#ff00ff"/><rect x="1265" y="333" width="1" height="1" fill="#ff00ff"/><rect x="1264" y="332" width="1" height="1" fill="#ff00ff"/><rect x="1285" y="333" width="1" height="1" fill="#ff00ff"/><rect x="1284" y="333" width="1" height="1" fill="#ff00ff"/><rect x="1285" y="332" width="1" height="1" fill="#ff00ff"/>
<text x="1275.0" y="332" fill="#000" font-size="11" text-anchor="middle">350</text>
<rect x="1177" y="410" width="40" height="12" fill="#fff"/><rect x="1179" y="409" width="36" height="1" fill="#ff00ff"/><rect x="1179" y="422" width="36" height="1" fill="#ff00ff"/><rect x="1176" y="412" width="1" height="8" fill="#ff00ff"/><rect x="1217" y="412" width="1" height="8" fill="#ff00ff"/><rect x="1177" y="410" width="1" height="1" fill="#ff00ff"/><rect x="1178" y="410" width="1" height="1" fill="#ff00ff"/><rect x="1177" y="411" width="1" height="1" fill="#ff00ff"/><rect x="1216" y="410" width="1" height="1" fill="#ff00ff"/><rect x="1215" y="410" width="1" height="1" fill="#ff00ff"/><rect x="1216" y="411" width="1" height="1" fill="#ff00ff"/><rect x="1177" y="421" width="1" height="1" fill="#ff00ff"/><rect x="1178" y="421" width="1" height="1" fill="#ff00ff"/><rect x="1177" y="420" width="1" height="1" fill="#ff00ff"/><rect x="1216" y="421" width="1" height="1" fill="#ff00ff"/><rect x="1215" y="421" width="1" height="1" fill="#ff00ff"/><rect x="1216" y="420" width="1" height="1" fill="#ff00ff"/>
<text x="1197.0" y="420" fill="#000" font-size="11" text-anchor="middle">-39.953</text>
<rect x="1512" y="114" width="22" height="12" fill="#fff"/><rect x="1514" y="113" width="18" height="1" fill="#ff00ff"/><rect x="1514" y="126" width="18" height="1" fill="#ff00ff"/><rect x="1511" y="116" width="1" height="8" fill="#ff00ff"/><rect x="1534" y="116" width="1" height="8" fill="#ff00ff"/><rect x="1512" y="114" width="1" height="1" fill="#ff00ff"/><rect x="1513" y="114" width="1" height="1" fill="#ff00ff"/><rect x="1512" y="115" width="1" height="1" fill="#ff00ff"/><rect x="1533" y="114" width="1" height="1" fill="#ff00ff"/><rect x="1532" y="114" width="1" height="1" fill="#ff00ff"/><rect x="1533" y="115" width="1" height="1" fill="#ff00ff"/><rect x="1512" y="125" width="1" height="1" fill="#ff00ff"/><rect x="1513" y="125" width="1" height="1" fill="#ff00ff"/><rect x="1512" y="124" width="1" height="1" fill="#ff00ff"/><rect x="1533" y="125" width="1" height="1" fill="#ff00ff"/><rect x="1532" y="125" width="1" height="1" fill="#ff00ff"/><rect x="1533" y="124" width="1" height="1" fill="#ff00ff"/>
<text x="1523.0" y="124" fill="#000" font-size="11" text-anchor="middle">430</text>
<rect x="1513" y="338" width="44" height="12" fill="#fff"/><rect x="1515" y="337" width="40" height="1" fill="#ff00ff"/><rect x="1515" y="350" width="40" height="1" fill="#ff00ff"/><rect x="1512" y="340" width="1" height="8" fill="#ff00ff"/><rect x="1557" y="340" width="1" height="8" fill="#ff00ff"/><rect x="1513" y="338" width="1" height="1" fill="#ff00ff"/><rect x="1514" y="338" width="1" height="1" fill="#ff00ff"/><rect x="1513" y="339" width="1" height="1" fill="#ff00ff"/><rect x="1556" y="338" width="1" height="1" fill="#ff00ff"/><rect x="1555" y="338" width="1" height="1" fill="#ff00ff"/><rect x="1556" y="339" width="1" height="1" fill="#ff00ff"/><rect x="1513" y="349" width="1" height="1" fill="#ff00ff"/><rect x="1514" y="349" width="1" height="1" fill="#ff00ff"/><rect x="1513" y="348" width="1" height="1" fill="#ff00ff"/><rect x="1556" y="349" width="1" height="1" fill="#ff00ff"/><rect x="1555" y="349" width="1" height="1" fill="#ff00ff"/><rect x="1556" y="348" width="1" height="1" fill="#ff00ff"/>
<text x="1535.0" y="348" fill="#000" font-size="11" text-anchor="middle">463.75m</text>
<text x="865" y="162" fill="#008000" font-size="12" text-anchor="end">R15</text>
<text x="865" y="177" fill="#008000" font-size="12" text-anchor="end">24k</text>
<text x="945" y="170" fill="#008000" font-size="12" text-anchor="end">R16</text>
<text x="945" y="185" fill="#008000" font-size="12" text-anchor="end">24k</text>
<text x="787" y="255" fill="#008000" font-size="12">V6</text>
<text x="794" y="400" fill="#008000" font-size="12">V2</text>
<text x="891" y="373" fill="#008000" font-size="12">X6</text>
<text x="891" y="387" fill="#008000" font-size="12">EF184</text>
<text x="942" y="372" fill="#008000" font-size="12">X7</text>
<text x="970" y="378" fill="#008000" font-size="12">R18</text>
<text x="980" y="392" fill="#008000" font-size="12">300</text>
<text x="928" y="441" fill="#008000" font-size="12">Q1</text>
<text x="979" y="498" fill="#008000" font-size="12">R14</text>
<text x="988" y="513" fill="#008000" font-size="12">2k</text>
<text x="1016" y="545" fill="#008000" font-size="12" text-anchor="end">R17</text>
<text x="1016" y="561" fill="#008000" font-size="12" text-anchor="end">6k2</text>
<text x="1053" y="613" fill="#008000" font-size="12">L4</text>
<text x="1053" y="627" fill="#008000" font-size="12">60m</text>
<text x="1051" y="368" fill="#008000" font-size="12">C2</text>
<text x="1049" y="383" fill="#008000" font-size="12">1u</text>
<text x="1107" y="287" fill="#008000" font-size="12">C3</text>
<text x="1117" y="303" fill="#008000" font-size="12">1u</text>
<text x="1065" y="441" fill="#008000" font-size="12" text-anchor="end">R5</text>
<text x="1065" y="456" fill="#008000" font-size="12" text-anchor="end">100k</text>
<text x="1121" y="441" fill="#008000" font-size="12" text-anchor="end">R6</text>
<text x="1121" y="456" fill="#008000" font-size="12" text-anchor="end">100k</text>
<text x="1059" y="505" fill="#008000" font-size="12">V4</text>
<text x="1200" y="138" fill="#008000" font-size="12" text-anchor="end">R11</text>
<text x="1200" y="152" fill="#008000" font-size="12" text-anchor="end">50</text>
<text x="1304" y="138" fill="#008000" font-size="12" text-anchor="end">R12</text>
<text x="1304" y="152" fill="#008000" font-size="12" text-anchor="end">50</text>
<text x="1185" y="205" fill="#008000" font-size="12">L1</text>
<text x="1189" y="222" fill="#008000" font-size="12">20</text>
<text x="1343" y="198" fill="#008000" font-size="12">L2</text>
<text x="1341" y="220" fill="#008000" font-size="12">20</text>
<text x="1279" y="217" fill="#008000" font-size="12">K1</text>
<text x="1226" y="281" fill="#008000" font-size="12">R13</text>
<text x="1236" y="296" fill="#008000" font-size="12">8k</text>
<text x="1283" y="287" fill="#008000" font-size="12">C4</text>
<text x="1271" y="302" fill="#008000" font-size="12">300p</text>
<text x="1225" y="340" fill="#008000" font-size="12">X4</text>
<text x="1302" y="340" fill="#008000" font-size="12">X5</text>
<text x="1316" y="355" fill="#008000" font-size="12">KT88</text>
<text x="1251" y="359" fill="#008000" font-size="12">V5</text>
<text x="1499" y="151" fill="#008000" font-size="12">V1</text>
<text x="1456" y="380" fill="#008000" font-size="12" text-anchor="end">60m</text>
<text x="1456" y="395" fill="#008000" font-size="12" text-anchor="end">L3</text>
<text x="1520" y="377" fill="#008000" font-size="12" text-anchor="end">R10</text>
<text x="1520" y="392" fill="#008000" font-size="12" text-anchor="end">8</text>
<text x="1178" y="317" fill="#800000" font-size="12">A</text>
<text x="1179" y="404" fill="#800000" font-size="12">B</text>
<text x="1515" y="332" fill="#800000" font-size="12">OUT</text></g>
</svg>
<svg class="abs" style="left:0;top:0" width="1638" height="100" font-family="Liberation Sans" shape-rendering="crispEdges"><defs><pattern id="chk" width="2" height="2" patternUnits="userSpaceOnUse"><rect width="2" height="2" fill="#f4f4f4"/><rect width="1" height="1" fill="#e8e8e8"/><rect x="1" y="1" width="1" height="1" fill="#e8e8e8"/></pattern></defs><rect x="72" y="35" width="22" height="21" fill="url(#chk)"/>
<rect x="72" y="35" width="22" height="1" fill="#a0a0a0"/><rect x="72" y="35" width="1" height="21" fill="#a0a0a0"/>
<rect x="72" y="55" width="22" height="1" fill="#fff"/><rect x="93" y="35" width="1" height="21" fill="#fff"/>
<g transform="translate(17,37)"><path d="M1,1v11l3-3 3,5 2-1-3-5h4z" fill="#000"/></g>
<g transform="translate(37,37)"><path d="M0,8L7,1" stroke="#000"/><rect x="9.5" y="1.5" width="6" height="6" fill="none" stroke="#000" stroke-width="1.2"/><path d="M3.5,9.5l3,3-3,3-3-3z" fill="none" stroke="#000"/><circle cx="12.5" cy="12.5" r="3.2" fill="none" stroke="#000" stroke-width="1.2"/></g>
<g transform="translate(76,37)"><rect x="1.5" y="3.5" width="12" height="8" fill="none" stroke="#000" stroke-dasharray="1 1"/><path d="M0,13c3,0 4,3 6,1s3-9 5-9 3,2 4,3" fill="none" stroke="#000080" stroke-width="1.1"/></g>
<g transform="translate(98,37)"><path d="M0,5c1-5 4-5 5,0s3,5 4,0 4-3 6,1" fill="none" stroke="#000080" stroke-width="1.1"/><path d="M4,2v7M13,2v7" stroke="#000" stroke-dasharray="1 1"/><rect x="0" y="11" width="16" height="1" fill="#000"/><rect x="2" y="13" width="5" height="1" fill="#000"/><rect x="9" y="13" width="5" height="1" fill="#000"/><rect x="2" y="15" width="5" height="1" fill="#000"/><rect x="9" y="15" width="5" height="1" fill="#000"/></g>
<g transform="translate(121,37)"><path d="M0,1.5h3v3h10v-3h3" fill="none" stroke="#000080" stroke-width="1.1"/><path d="M2.5,5v9M13.5,5v9" stroke="#000" stroke-dasharray="1 1"/><path d="M1,13h14M6,11v4M9,11h2v4h-2z" stroke="#000" fill="none"/></g>
<g transform="translate(144,37)"><path d="M2,1v14M2,1h10" stroke="#000" stroke-dasharray="1 1" fill="none"/><path d="M1,8h4M1,10h4" stroke="#000"/><path d="M8,15c2-2 3-13 6-13 1,0 2,1 2,2" fill="none" stroke="#000080" stroke-width="1.1"/></g>
<g transform="translate(167,37)"><text x="8" y="6" font-size="7" font-weight="bold" fill="#000">1.0</text><path d="M8,5h7M8,5l-5,5M3,10l3-1-2-2z" stroke="#000" fill="#000"/><path d="M0,11h4v3h5v-3h7" fill="none" stroke="#000080" stroke-width="1.1"/></g>
<g transform="translate(190,37)"><text x="2" y="6" font-size="7" font-weight="bold" fill="#800000">F()</text><path d="M1,4v11M15,4v11" stroke="#000" stroke-dasharray="1 1"/><circle cx="1" cy="8" r="1.5" fill="#000"/><circle cx="15" cy="8" r="1.5" fill="#000"/><path d="M1,15c3-6 11-6 14,0" fill="none" stroke="#000080" stroke-width="1.1"/></g>
<g transform="translate(213,37)"><path d="M1,1h14v4h-1.5l-1-2h-3.5v10h2v2h-8v-2h2v-10h-3.5l-1,2h-1.5z" fill="#000"/></g>
<g transform="translate(241,37)"><rect x="1.5" y="5.5" width="12" height="10" fill="#fff" stroke="#000" stroke-width="1.1"/><path d="M4,9h7M4,11h7M4,13h7" stroke="#000"/><path d="M3,7l4-4 3,3M7,3c2-2 6-2 7,1" fill="none" stroke="#000"/><rect x="14" y="1" width="2" height="6" fill="#000080"/></g>
<g transform="translate(271,37)"><path d="M2,2v11l11-5.5z" fill="#000"/></g>
<g transform="translate(294,37)"><rect x="1" y="2" width="12" height="11" fill="#a0a0a0"/></g>
<g transform="translate(317,37)"><rect x="1" y="2" width="4" height="11" fill="#a0a0a0"/><rect x="8" y="2" width="4" height="11" fill="#a0a0a0"/></g>
<g transform="translate(343,37)"><path d="M0,15L13,3h3" fill="none" stroke="#000"/><circle cx="4" cy="11" r="1.3" fill="#000"/><circle cx="9" cy="6.5" r="1.3" fill="#000"/></g>
<g transform="translate(366,37)"><path d="M2,14L13,3" stroke="#000"/><rect x="0.5" y="12.5" width="3" height="3" fill="#fff" stroke="#000" stroke-width="1.2"/><rect x="6.5" y="6.5" width="3" height="3" fill="#fff" stroke="#000" stroke-width="1.2"/><rect x="12.5" y="0.5" width="3" height="3" fill="#fff" stroke="#000" stroke-width="1.2"/></g>
<g transform="translate(394,37)"><rect x="0" y="0" width="16" height="15" fill="#000"/><rect x="2" y="2" width="12" height="11" fill="#f0f0f0"/><rect x="3" y="1" width="1" height="1" fill="#f0f0f0"/><rect x="3" y="13" width="1" height="1" fill="#f0f0f0"/><rect x="5" y="1" width="1" height="1" fill="#f0f0f0"/><rect x="5" y="13" width="1" height="1" fill="#f0f0f0"/><rect x="7" y="1" width="1" height="1" fill="#f0f0f0"/><rect x="7" y="13" width="1" height="1" fill="#f0f0f0"/><rect x="9" y="1" width="1" height="1" fill="#f0f0f0"/><rect x="9" y="13" width="1" height="1" fill="#f0f0f0"/><rect x="11" y="1" width="1" height="1" fill="#f0f0f0"/><rect x="11" y="13" width="1" height="1" fill="#f0f0f0"/><rect x="1" y="3" width="1" height="1" fill="#f0f0f0"/><rect x="14" y="3" width="1" height="1" fill="#f0f0f0"/><rect x="1" y="5" width="1" height="1" fill="#f0f0f0"/><rect x="14" y="5" width="1" height="1" fill="#f0f0f0"/><rect x="1" y="7" width="1" height="1" fill="#f0f0f0"/><rect x="14" y="7" width="1" height="1" fill="#f0f0f0"/><rect x="1" y="9" width="1" height="1" fill="#f0f0f0"/><rect x="14" y="9" width="1" height="1" fill="#f0f0f0"/><rect x="1" y="11" width="1" height="1" fill="#f0f0f0"/><rect x="14" y="11" width="1" height="1" fill="#f0f0f0"/><rect x="4" y="2" width="1" height="1" fill="#000"/><rect x="4" y="12" width="1" height="1" fill="#000"/><rect x="6" y="2" width="1" height="1" fill="#000"/><rect x="6" y="12" width="1" height="1" fill="#000"/><rect x="8" y="2" width="1" height="1" fill="#000"/><rect x="8" y="12" width="1" height="1" fill="#000"/><rect x="10" y="2" width="1" height="1" fill="#000"/><rect x="10" y="12" width="1" height="1" fill="#000"/><rect x="2" y="4" width="1" height="1" fill="#000"/><rect x="13" y="4" width="1" height="1" fill="#000"/><rect x="2" y="6" width="1" height="1" fill="#000"/><rect x="13" y="6" width="1" height="1" fill="#000"/><rect x="2" y="8" width="1" height="1" fill="#000"/><rect x="13" y="8" width="1" height="1" fill="#000"/><rect x="2" y="10" width="1" height="1" fill="#000"/><rect x="13" y="10" width="1" height="1" fill="#000"/></g>
<g transform="translate(417,37)"><rect x="0.5" y="0.5" width="15" height="14" fill="#f8f8f8" stroke="#000" stroke-width="1.5"/><rect x="5" y="1" width="1" height="2" fill="#000"/><rect x="5" y="12" width="1" height="2" fill="#000"/><rect x="10" y="1" width="1" height="2" fill="#000"/><rect x="10" y="12" width="1" height="2" fill="#000"/><rect x="1" y="5" width="2" height="1" fill="#000"/><rect x="13" y="5" width="2" height="1" fill="#000"/><rect x="1" y="9" width="2" height="1" fill="#000"/><rect x="13" y="9" width="2" height="1" fill="#000"/><rect x="4" y="5" width="3" height="1" fill="#000"/><rect x="5" y="4" width="1" height="3" fill="#000"/><rect x="4" y="9" width="3" height="1" fill="#000"/><rect x="5" y="8" width="1" height="3" fill="#000"/><rect x="9" y="5" width="3" height="1" fill="#000"/><rect x="10" y="4" width="1" height="3" fill="#000"/><rect x="9" y="9" width="3" height="1" fill="#000"/><rect x="10" y="8" width="1" height="3" fill="#000"/></g>
<g transform="translate(60,37)"><path d="M0,7h8l-4,4z" fill="#000"/></g>
<rect x="235" y="37" width="1" height="17" fill="#a0a0a0"/><rect x="236" y="37" width="1" height="17" fill="#fff"/>
<rect x="263" y="37" width="1" height="17" fill="#a0a0a0"/><rect x="264" y="37" width="1" height="17" fill="#fff"/>
<rect x="337" y="37" width="1" height="17" fill="#a0a0a0"/><rect x="338" y="37" width="1" height="17" fill="#fff"/>
<rect x="388" y="37" width="1" height="17" fill="#a0a0a0"/><rect x="389" y="37" width="1" height="17" fill="#fff"/>
<rect x="439" y="37" width="1" height="17" fill="#a0a0a0"/><rect x="440" y="37" width="1" height="17" fill="#fff"/>
<rect x="536" y="37" width="1" height="17" fill="#a0a0a0"/><rect x="537" y="37" width="1" height="17" fill="#fff"/>
<rect x="587" y="37" width="1" height="17" fill="#a0a0a0"/><rect x="588" y="37" width="1" height="17" fill="#fff"/>
<rect x="442" y="35" width="23" height="21" fill="url(#chk)"/>
<rect x="442" y="35" width="23" height="1" fill="#a0a0a0"/><rect x="442" y="35" width="1" height="21" fill="#a0a0a0"/>
<rect x="442" y="55" width="23" height="1" fill="#fff"/><rect x="464" y="35" width="1" height="21" fill="#fff"/>
<rect x="465" y="35" width="23" height="21" fill="url(#chk)"/>
<rect x="465" y="35" width="23" height="1" fill="#a0a0a0"/><rect x="465" y="35" width="1" height="21" fill="#a0a0a0"/>
<rect x="465" y="55" width="23" height="1" fill="#fff"/><rect x="487" y="35" width="1" height="21" fill="#fff"/>
<rect x="488" y="35" width="23" height="21" fill="url(#chk)"/>
<rect x="488" y="35" width="23" height="1" fill="#a0a0a0"/><rect x="488" y="35" width="1" height="21" fill="#a0a0a0"/>
<rect x="488" y="55" width="23" height="1" fill="#fff"/><rect x="510" y="35" width="1" height="21" fill="#fff"/>
<g transform="translate(446,37)"><rect x="1" y="1" width="14" height="14" fill="none" stroke="#000" stroke-width="2"/><path d="M3.5,2v12M5.5,2v12M7.5,2v12M9.5,2v12M11.5,2v12M13.5,2v12" stroke="#000"/></g>
<g transform="translate(469,37)"><rect x="1" y="1" width="14" height="14" fill="none" stroke="#000" stroke-width="2"/><path d="M2,3.5h12M2,5.5h12M2,7.5h12M2,9.5h12M2,11.5h12M2,13.5h12" stroke="#000"/></g>
<g transform="translate(492,37)"><rect x="1" y="1" width="14" height="14" fill="#fff" stroke="#000" stroke-width="2"/><path d="M5.5,2v12" stroke="#000"/><rect x="7" y="3" width="1" height="1" fill="#000"/><rect x="7" y="5" width="1" height="1" fill="#000"/><rect x="7" y="7" width="1" height="1" fill="#000"/><rect x="7" y="9" width="1" height="1" fill="#000"/><rect x="7" y="11" width="1" height="1" fill="#000"/><rect x="7" y="13" width="1" height="1" fill="#000"/><rect x="9" y="3" width="1" height="1" fill="#000"/><rect x="9" y="5" width="1" height="1" fill="#000"/><rect x="9" y="7" width="1" height="1" fill="#000"/><rect x="9" y="9" width="1" height="1" fill="#000"/><rect x="9" y="11" width="1" height="1" fill="#000"/><rect x="9" y="13" width="1" height="1" fill="#000"/><rect x="11" y="3" width="1" height="1" fill="#000"/><rect x="11" y="5" width="1" height="1" fill="#000"/><rect x="11" y="7" width="1" height="1" fill="#000"/><rect x="11" y="9" width="1" height="1" fill="#000"/><rect x="11" y="11" width="1" height="1" fill="#000"/><rect x="11" y="13" width="1" height="1" fill="#000"/><rect x="13" y="3" width="1" height="1" fill="#000"/><rect x="13" y="5" width="1" height="1" fill="#000"/><rect x="13" y="7" width="1" height="1" fill="#000"/><rect x="13" y="9" width="1" height="1" fill="#000"/><rect x="13" y="11" width="1" height="1" fill="#000"/><rect x="13" y="13" width="1" height="1" fill="#000"/></g>
<g transform="translate(514,37)"><rect x="1" y="1" width="14" height="14" fill="none" stroke="#000" stroke-width="2"/><path d="M5.5,2v12M10.5,2v12" stroke="#000" stroke-dasharray="1 1"/></g>
<g transform="translate(542,37)"><rect x="1" y="1" width="14" height="14" fill="none" stroke="#000" stroke-width="2"/><path d="M2,10.5h12" stroke="#000" stroke-width="1.5"/></g>
<g transform="translate(565,37)"><path d="M4,1v14M0,8h12" stroke="#000" stroke-dasharray="2 2"/><path d="M0,11L15,3" stroke="#0000ff" stroke-width="1.1"/></g>
<rect x="136" y="61" width="22" height="20" fill="url(#chk)"/>
<rect x="136" y="61" width="22" height="1" fill="#a0a0a0"/><rect x="136" y="61" width="1" height="20" fill="#a0a0a0"/>
<rect x="136" y="80" width="22" height="1" fill="#fff"/><rect x="157" y="61" width="1" height="20" fill="#fff"/>
<rect x="492" y="61" width="24" height="20" fill="url(#chk)"/>
<rect x="492" y="61" width="24" height="1" fill="#a0a0a0"/><rect x="492" y="61" width="1" height="20" fill="#a0a0a0"/>
<rect x="492" y="80" width="24" height="1" fill="#fff"/><rect x="515" y="61" width="1" height="20" fill="#fff"/>
<rect x="516" y="61" width="23" height="20" fill="url(#chk)"/>
<rect x="516" y="61" width="23" height="1" fill="#a0a0a0"/><rect x="516" y="61" width="1" height="20" fill="#a0a0a0"/>
<rect x="516" y="80" width="23" height="1" fill="#fff"/><rect x="538" y="61" width="1" height="20" fill="#fff"/>
<g transform="translate(15,64)"><path d="M8,1v14" stroke="#000" stroke-dasharray="1 1"/><path d="M0,14c5,0 5-5 8-9s4-4 6-4" fill="none" stroke="#0000ff" stroke-width="1.1"/><path d="M0,6h7M4,3l3,3-3,3" fill="none" stroke="#000" stroke-width="1.5"/></g>
<g transform="translate(37,64)"><path d="M7,1v14" stroke="#000" stroke-dasharray="1 1"/><path d="M0,13h5c5,0 7-3 11-6" fill="none" stroke="#0000ff" stroke-width="1.1"/><path d="M7,1v10M4,8l3,3 3-3" fill="none" stroke="#000" stroke-width="1.5"/></g>
<g transform="translate(60,64)"><path d="M6,1v14M10,1v14" stroke="#000" stroke-dasharray="1 1"/><path d="M0,13h5c5,0 7-3 11-6" fill="none" stroke="#0000ff" stroke-width="1.1"/><path d="M6,2v9M4,8l2,3 2-3M10,2v9M8,4l2,3 2-3" fill="none" stroke="#000" stroke-width="1.4"/></g>
<g transform="translate(83,64)"><path d="M0,2h5c3,0 3,5 6,5h5M0,5h5c3,0 3,5 6,5h5M0,8h4c3,0 3,5 6,5h6" fill="none" stroke="#b0b0b0"/></g>
<g transform="translate(111,64)"><rect x="0.5" y="0.5" width="15" height="14" fill="#fff" stroke="#000080" stroke-width="1.1"/><path d="M2,5l3-2 3,1 4-2 2,2" fill="none" stroke="#0000ff"/><path d="M2,11h3l2-2 3,2 4-3" fill="none" stroke="#ff0000"/><path d="M4,11l6-7h3l-6,7z" fill="#fff" stroke="#000" stroke-width="1.5"/></g>
<g transform="translate(140,64)"><path d="M8,1v15" stroke="#000" stroke-dasharray="1 1"/><path d="M1,8h14" stroke="#0000ff" stroke-width="1.5"/><circle cx="3" cy="8" r="2" fill="#0000ff"/><circle cx="8" cy="8" r="2" fill="#0000ff"/><circle cx="13" cy="8" r="2" fill="#0000ff"/></g>
<g transform="translate(162,64)"><path d="M7,1v15" stroke="#000" stroke-dasharray="1 1"/><path d="M1,8h14" stroke="#0000ff" stroke-width="1.5"/><circle cx="3" cy="8" r="2" fill="#0000ff"/><circle cx="12" cy="8" r="2" fill="#0000ff"/></g>
<g transform="translate(185,64)"><path d="M8,1v15" stroke="#000" stroke-dasharray="1 1"/><path d="M0,15c2-3 3-14 6-14s4,11 6,14" fill="none" stroke="#0000ff" stroke-width="1.1"/></g>
<g transform="translate(208,64)"><path d="M8,1v15" stroke="#000" stroke-dasharray="1 1"/><path d="M1,1c2,3 3,14 6,14s4-11 6-14" fill="none" stroke="#0000ff" stroke-width="1.1"/></g>
<g transform="translate(231,64)"><path d="M10,2v14" stroke="#000" stroke-dasharray="1 1"/><path d="M0,12c2-4 3,3 5,1s3-10 5-10 3,9 5,12" fill="none" stroke="#0000ff" stroke-width="1.1"/></g>
<g transform="translate(254,64)"><path d="M11,2v14" stroke="#000" stroke-dasharray="1 1"/><path d="M0,3c2,4 3-3 5-1s3,10 6,10 3-7 4-9" fill="none" stroke="#0000ff" stroke-width="1.1"/></g>
<g transform="translate(277,64)"><path d="M8,1v15" stroke="#000" stroke-dasharray="1 1"/><path d="M0,15L16,1" stroke="#0000ff" stroke-width="1.1"/></g>
<g transform="translate(300,64)"><path d="M8,1v15" stroke="#000" stroke-dasharray="1 1"/><path d="M0,13c2-5 4-10 7-10s4,5 6,10M5,15c1-4 3-10 5-10s3,4 5,8" fill="none" stroke="#0000ff" stroke-width="1.2"/></g>
<g transform="translate(323,64)"><path d="M8,1v15" stroke="#000" stroke-dasharray="1 1"/><path d="M0,3c2,5 4,10 7,10s4-5 6-10M4,1c1,4 3,10 5,10s3-4 6-9" fill="none" stroke="#0000ff" stroke-width="1.2"/></g>
<g transform="translate(346,64)"><path d="M9,1v15" stroke="#000" stroke-dasharray="1 1"/><path d="M0,3c3,4 6,4 9,4s6,0 7-4M0,7c3,4 6,4 9,4s6,0 7-4M0,10c3,4 6,4 9,4s6,0 7-4" fill="none" stroke="#0000ff" stroke-width="1.2"/><path d="M6,12l3,3 3-3z" fill="#000"/></g>
<g transform="translate(369,64)"><path d="M8,1v15" stroke="#000" stroke-dasharray="1 1"/><path d="M0,8c3-4 5-4 8-4s6,0 8,4M0,11c3-4 5-4 8-4s6,0 8,4M0,14c3-4 5-4 8-4s6,0 8,4" fill="none" stroke="#0000ff" stroke-width="1.2"/><circle cx="8" cy="4" r="2" fill="#0000ff"/></g>
<g transform="translate(397,64)"><rect x="1" y="7" width="14" height="9" fill="#ffff00" stroke="#000"/><path d="M1,7l3-3h12l-1,3" fill="#e0e000" stroke="#000"/><rect x="3" y="0" width="5" height="6" fill="#4060ff"/><rect x="8" y="1" width="5" height="6" fill="#ff2020"/><rect x="6" y="9" width="4" height="3" fill="#000"/></g>
<g transform="translate(440,64)"><rect x="0.5" y="0.5" width="15" height="15" fill="#fff" stroke="#000" stroke-width="1.1"/><path d="M2,3.5h12M2,6h12M2,8.5h12M2,11h12M2,13.5h12M5.5,2v12M9.5,2v12" stroke="#000"/></g>
<g transform="translate(468,64)"><text x="8" y="14" font-size="17" font-weight="bold" text-anchor="middle" fill="#000" font-family="Liberation Sans">'P'</text></g>
<g transform="translate(621,64)"><circle cx="8" cy="8" r="6.5" fill="#d8d8d8" stroke="#b8b8b8" stroke-width="1.5"/><path d="M3,8h10M8,2v12M4,5h8M4,11h8" stroke="#a8a8a8"/></g>
<g transform="translate(644,64)"><path d="M1,1h13v4h-1.5l-1-2h-5v4h3l.5-1.5h1.5v5h-1.5l-.5-1.5h-3v4h2v2h-7.5v-2h2v-10h-2z" fill="#000"/></g>
<g transform="translate(497,64)"><text x="0" y="7" font-size="8" font-weight="bold" fill="#800000">X</text><path d="M8,4v11M3,15h10M2,9h12" stroke="#000" stroke-width="1.1"/><path d="M1,12c1,2 3,2 4,0M11,12c1,2 3,2 4,0" fill="none" stroke="#c0a000"/></g>
<g transform="translate(520,64)"><text x="0" y="7" font-size="8" font-weight="bold" fill="#800000">Y</text><path d="M8,4v11M3,15h10M2,9h12" stroke="#000" stroke-width="1.1"/><path d="M1,12c1,2 3,2 4,0M11,12c1,2 3,2 4,0" fill="none" stroke="#c0a000"/></g>
<g transform="translate(547,64)"><circle cx="6" cy="6" r="5" fill="#fff" stroke="#000" stroke-width="1.5"/><path d="M9.5,9.5l5,5" stroke="#000" stroke-width="2.2"/><path d="M3,6h6M6,3v6" stroke="#000" stroke-width="1.8"/></g>
<g transform="translate(570,64)"><circle cx="6" cy="6" r="5" fill="#fff" stroke="#000" stroke-width="1.5"/><path d="M9.5,9.5l5,5" stroke="#000" stroke-width="2.2"/><path d="M3,6h6" stroke="#000" stroke-width="1.8"/></g>
<g transform="translate(594,64)"><circle cx="6" cy="6" r="5" fill="#fff" stroke="#000" stroke-width="1.5"/><path d="M9.5,9.5l5,5" stroke="#000" stroke-width="2.2"/><rect x="2.5" y="3.5" width="7" height="5" fill="#fff" stroke="#0000ff"/><path d="M3,8l2-3 2,2 2-2" fill="none" stroke="#ff0000"/></g>
<g transform="translate(421,64)"><path d="M0,7h8l-4,4z" fill="#000"/></g>
<rect x="105" y="63" width="1" height="17" fill="#a0a0a0"/><rect x="106" y="63" width="1" height="17" fill="#fff"/>
<rect x="133" y="63" width="1" height="17" fill="#a0a0a0"/><rect x="134" y="63" width="1" height="17" fill="#fff"/>
<rect x="391" y="63" width="1" height="17" fill="#a0a0a0"/><rect x="392" y="63" width="1" height="17" fill="#fff"/>
<rect x="434" y="63" width="1" height="17" fill="#a0a0a0"/><rect x="435" y="63" width="1" height="17" fill="#fff"/>
<rect x="462" y="63" width="1" height="17" fill="#a0a0a0"/><rect x="463" y="63" width="1" height="17" fill="#fff"/>
<rect x="490" y="63" width="1" height="17" fill="#a0a0a0"/><rect x="491" y="63" width="1" height="17" fill="#fff"/>
<rect x="542" y="63" width="1" height="17" fill="#a0a0a0"/><rect x="543" y="63" width="1" height="17" fill="#fff"/>
<rect x="615" y="63" width="1" height="17" fill="#a0a0a0"/><rect x="616" y="63" width="1" height="17" fill="#fff"/>
<rect x="699" y="35" width="22" height="21" fill="url(#chk)"/>
<rect x="699" y="35" width="22" height="1" fill="#a0a0a0"/><rect x="699" y="35" width="1" height="21" fill="#a0a0a0"/>
<rect x="699" y="55" width="22" height="1" fill="#fff"/><rect x="720" y="35" width="1" height="21" fill="#fff"/>
<rect x="994" y="35" width="22" height="21" fill="url(#chk)"/>
<rect x="994" y="35" width="22" height="1" fill="#a0a0a0"/><rect x="994" y="35" width="1" height="21" fill="#a0a0a0"/>
<rect x="994" y="55" width="22" height="1" fill="#fff"/><rect x="1015" y="35" width="1" height="21" fill="#fff"/>
<rect x="1017" y="35" width="22" height="21" fill="url(#chk)"/>
<rect x="1017" y="35" width="22" height="1" fill="#a0a0a0"/><rect x="1017" y="35" width="1" height="21" fill="#a0a0a0"/>
<rect x="1017" y="55" width="22" height="1" fill="#fff"/><rect x="1038" y="35" width="1" height="21" fill="#fff"/>
<rect x="1101" y="35" width="23" height="21" fill="url(#chk)"/>
<rect x="1101" y="35" width="23" height="1" fill="#a0a0a0"/><rect x="1101" y="35" width="1" height="21" fill="#a0a0a0"/>
<rect x="1101" y="55" width="23" height="1" fill="#fff"/><rect x="1123" y="35" width="1" height="21" fill="#fff"/>
<rect x="1277" y="35" width="22" height="21" fill="url(#chk)"/>
<rect x="1277" y="35" width="22" height="1" fill="#a0a0a0"/><rect x="1277" y="35" width="1" height="21" fill="#a0a0a0"/>
<rect x="1277" y="55" width="22" height="1" fill="#fff"/><rect x="1298" y="35" width="1" height="21" fill="#fff"/>
<g transform="translate(705,37)"><path d="M1,1v11l3-3 3,5 2-1-3-5h4z" fill="#000"/></g>
<g transform="translate(724,37)"><path d="M0,9l3-3 3,3 3-3 3,3 3-3 1,1" fill="none" stroke="#000"/></g>
<g transform="translate(748,37)"><path d="M1,1h14v4h-1.5l-1-2h-3.5v10h2v2h-8v-2h2v-10h-3.5l-1,2h-1.5z" fill="#000"/></g>
<g transform="translate(770,37)"><rect x="0" y="1" width="3" height="3" fill="#000"/><path d="M2,2.5h5v11h8" fill="none" stroke="#000" stroke-width="1.1"/></g>
<g transform="translate(793,37)"><rect x="0" y="0" width="3" height="3" fill="#000"/><path d="M2,2l13,13" stroke="#000" stroke-width="1.1"/></g>
<g transform="translate(817,37)"><rect x="0.5" y="0.5" width="14" height="13" rx="2" fill="#ffff00" stroke="#000"/><rect x="2.5" y="2.5" width="10" height="5" fill="#d0d0d0" stroke="#606060"/><path d="M3,11h9" stroke="#000"/><rect x="1" y="13" width="3" height="2" fill="#000"/><rect x="11" y="13" width="3" height="2" fill="#000"/></g>
<g transform="translate(839,37)"><path d="M0,8L7,1" stroke="#000"/><rect x="9.5" y="1.5" width="6" height="6" fill="none" stroke="#000" stroke-width="1.2"/><path d="M3.5,9.5l3,3-3,3-3-3z" fill="none" stroke="#000"/><circle cx="12.5" cy="12.5" r="3.2" fill="none" stroke="#000" stroke-width="1.2"/></g>
<g transform="translate(877,37)"><path d="M1,16V1h13v8H1" fill="none" stroke="#000" stroke-width="1.1"/></g>
<g transform="translate(902,37)"><circle cx="8" cy="2.5" r="2.2" fill="#000"/><path d="M5,6h5v8h2v2h-7v-2h2v-6h-2z" fill="#000"/></g>
<g transform="translate(924,37)"><path d="M0,1v11l3-3 3,5 2-1-3-5h4z" fill="#000"/><text x="8" y="11" font-size="12" font-weight="bold" fill="#000080">?</text></g>
<g transform="translate(946,37)"><circle cx="5.5" cy="6" r="5" fill="#2050d0"/><path d="M2,4h4v3h-3z" fill="#20a020"/><rect x="4.5" y="7.5" width="8" height="8" fill="#fff" stroke="#000"/><path d="M6,11h5M6,13h5" stroke="#000080"/><path d="M10,3c2-1 4,0 5,2" fill="none" stroke="#800000" stroke-width="1.1"/></g>
<g transform="translate(969,37)"><rect x="0.5" y="0.5" width="15" height="15" fill="#fff" stroke="#000" stroke-width="1.1"/><circle cx="5.5" cy="6" r="3.5" fill="#008000"/><circle cx="10.5" cy="11" r="3.5" fill="#ff0000"/><path d="M9,9.5l3,3M12,9.5l-3,3" stroke="#fff"/></g>
<g transform="translate(997,37)"><text x="8" y="11" font-size="8" font-weight="bold" text-anchor="middle" fill="#000" font-family="Liberation Mono">TEXT</text></g>
<g transform="translate(1020,37)"><text x="8" y="7" font-size="8" font-weight="bold" text-anchor="middle" fill="#000" font-family="Liberation Mono">R1</text><path d="M0,12l3-3 3,3 3-3 3,3 3-3" fill="none" stroke="#000" stroke-width="1.2"/></g>
<g transform="translate(1043,37)"><rect x="0.5" y="1.5" width="9" height="8" fill="#fff" stroke="#000" stroke-width="1.1"/><text x="5" y="8.5" font-size="8" font-weight="bold" text-anchor="middle" fill="#000">1</text><path d="M4,10v5M10,5l3,4 3-3" fill="none" stroke="#000"/></g>
<g transform="translate(1067,37)"><text x="0" y="6" font-size="7" font-weight="bold" fill="#b0b0b0" font-family="Liberation Mono">VIP</text><path d="M3,9l3,4 8-10" fill="none" stroke="#b0b0b0" stroke-width="2"/></g>
<g transform="translate(1105,37)"><rect x="0.5" y="1.5" width="11" height="9" fill="#fff" stroke="#800000" stroke-width="1.1"/><text x="6" y="9" font-size="8" font-weight="bold" text-anchor="middle" fill="#000">13</text><path d="M6,11v5M11,13l5-5" fill="none" stroke="#000"/></g>
<g transform="translate(1128,37)"><path d="M0,3h13" stroke="#0000ff" stroke-width="1.5"/><path d="M11,0l4,3-4,3z" fill="#0000ff"/><path d="M0,12h15M5,9v6M8,9v6M5,12l3-3v6z" stroke="#000" fill="#000"/></g>
<g transform="translate(1151,37)"><path d="M2,1l4,2" stroke="#909090" stroke-width="2"/><ellipse cx="7" cy="6" rx="2.5" ry="3.5" fill="#ffff00"/><circle cx="7" cy="7" r="1.5" fill="#ff0000"/><path d="M0,12h15M6,9v6M9,9v6" stroke="#000"/><path d="M6,12l3-3v6z" fill="#000"/></g>
<g transform="translate(1174,37)"><text x="8" y="7" font-size="8" font-weight="bold" text-anchor="middle" fill="#0000ff" font-family="Liberation Mono">ON</text><path d="M1,11h14M6,8v6M9,8v6" stroke="#000"/><path d="M6,11l3-3v6z" fill="#000"/></g>
<g transform="translate(1196,37)"><path d="M2,8h13" stroke="#000" stroke-width="1.5"/><rect x="0" y="6" width="3" height="4" fill="#000"/><rect x="13" y="6" width="3" height="4" fill="#000"/></g>
<g transform="translate(1219,37)"><rect x="1" y="1" width="1" height="1" fill="#000"/><rect x="1" y="5" width="1" height="1" fill="#000"/><rect x="1" y="9" width="1" height="1" fill="#000"/><rect x="1" y="13" width="1" height="1" fill="#000"/><rect x="5" y="1" width="1" height="1" fill="#000"/><rect x="5" y="5" width="1" height="1" fill="#000"/><rect x="5" y="9" width="1" height="1" fill="#000"/><rect x="5" y="13" width="1" height="1" fill="#000"/><rect x="9" y="1" width="1" height="1" fill="#000"/><rect x="9" y="5" width="1" height="1" fill="#000"/><rect x="9" y="9" width="1" height="1" fill="#000"/><rect x="9" y="13" width="1" height="1" fill="#000"/><rect x="13" y="1" width="1" height="1" fill="#000"/><rect x="13" y="5" width="1" height="1" fill="#000"/><rect x="13" y="9" width="1" height="1" fill="#000"/><rect x="13" y="13" width="1" height="1" fill="#000"/><rect x="17" y="1" width="1" height="1" fill="#000"/><rect x="17" y="5" width="1" height="1" fill="#000"/><rect x="17" y="9" width="1" height="1" fill="#000"/><rect x="17" y="13" width="1" height="1" fill="#000"/></g>
<g transform="translate(1257,37)"><rect x="1" y="1" width="14" height="14" fill="none" stroke="#000" stroke-width="1.5"/><path d="M8,15V9h7M8,12h7" fill="none" stroke="#000"/></g>
<g transform="translate(1281,37)"><path d="M5,1v3l3,3-3,3v5" fill="none" stroke="#000" stroke-width="1.1"/><path d="M7,7v8l2-2 2,3 1-1-2-3h3z" fill="#000"/></g>
<g transform="translate(1308,37)"><rect x="1.5" y="5.5" width="12" height="10" fill="#fff" stroke="#000" stroke-width="1.1"/><path d="M4,9h7M4,11h7M4,13h7" stroke="#000"/><path d="M3,7l4-4 3,3M7,3c2-2 6-2 7,1" fill="none" stroke="#000"/><rect x="14" y="1" width="2" height="6" fill="#000080"/></g>
<g transform="translate(1336,37)"><rect x="1.5" y="1.5" width="10" height="10" fill="none" stroke="#a8a8a8" stroke-width="1.1"/><rect x="4.5" y="4.5" width="10" height="10" fill="none" stroke="#a8a8a8" stroke-width="1.1"/><rect x="0" y="0" width="3" height="3" fill="#a8a8a8"/><rect x="10" y="0" width="3" height="3" fill="#a8a8a8"/><rect x="0" y="10" width="3" height="3" fill="#a8a8a8"/><rect x="13" y="13" width="3" height="3" fill="#a8a8a8"/><rect x="3" y="3" width="3" height="3" fill="#a8a8a8"/><rect x="13" y="3" width="3" height="3" fill="#a8a8a8"/><rect x="3" y="13" width="3" height="3" fill="#a8a8a8"/></g>
<g transform="translate(1359,37)"><path d="M0,8h16" stroke="#a8a8a8" stroke-width="1.1"/><path d="M2,4l5,4-5,4zM14,4l-5,4 5,4z" fill="#a8a8a8"/></g>
<g transform="translate(1383,37)"><path d="M3,4c3-3 8-3 10,1s-1,9-5,9-6-2-6-4" fill="none" stroke="#a8a8a8" stroke-width="1.1"/><path d="M1,1v5h5z" fill="#a8a8a8"/><rect x="7" y="8" width="2" height="2" fill="#a8a8a8"/></g>
<g transform="translate(1405,37)"><path d="M8,0v16M9,6h-6c-3,0-3,6 0,6h6M9,11h5" fill="none" stroke="#a8a8a8" stroke-width="1.1"/><path d="M10,3l4,3-4,3z" fill="#a8a8a8"/></g>
<g transform="translate(1428,37)"><path d="M0,6h16M4,6v5c0,4 6,4 6,0V2" fill="none" stroke="#a8a8a8" stroke-width="1.1"/><path d="M2,4l2-3 2,3z" fill="#a8a8a8"/></g>
<g transform="translate(1457,37)"><path d="M0,4h1v-1h1v-3h2v3h1v2h1v-2h1v-3h2v3h1v1h1v4h-3v-2h-3v2h-3z" fill="#000" transform="translate(0,2)"/><path d="M2,13.5h2l1-2 2,3 2-3 2,3 1-1h2" fill="none" stroke="#000080" stroke-width="1.2"/></g>
<g transform="translate(1479,37)"><path d="M0,6h1v-1h1v-1h1v-4h3v4h1v3h2v-3h1v-4h3v4h1v1h1v1h1v7h-5v-3h-3v3h-6z" fill="#000" transform="translate(0,2)"/><rect x="2" y="10" width="1" height="2" fill="#fff"/><rect x="12" y="10" width="1" height="2" fill="#fff"/></g>
<g transform="translate(1507,37)"><rect x="0.5" y="0.5" width="15" height="11" fill="none" stroke="#a8a8a8" stroke-width="1.5"/><path d="M3,4h4M3,7h4M9,4h4M9,7h4M8,2v10M4,15l4-3 4,3" fill="none" stroke="#a8a8a8" stroke-width="1.2"/></g>
<g transform="translate(1536,37)"><path d="M5,0h6l5,5v6l-5,5H5l-5-5V5z" fill="#a8a8a8"/><rect x="7" y="3" width="2.5" height="6" fill="#fff"/><rect x="7" y="11" width="2.5" height="2" fill="#fff"/></g>
<g transform="translate(1559,37)"><path d="M5,0h6l5,5v6l-5,5H5l-5-5V5z" fill="#a8a8a8"/><path d="M5,5l6,6M11,5l-6,6" stroke="#fff" stroke-width="1.8"/></g>
<g transform="translate(1586,37)"><rect x="0" y="0" width="10" height="10" fill="#a8a8a8"/><rect x="6" y="6" width="10" height="10" fill="#a8a8a8"/><rect x="3" y="3" width="7" height="7" fill="#d0d0d0"/></g>
<g transform="translate(1609,37)"><rect x="0" y="0" width="10" height="10" fill="#a8a8a8"/><rect x="6" y="6" width="10" height="10" fill="#a8a8a8"/><rect x="3" y="3" width="7" height="7" fill="#d0d0d0"/></g>
<g transform="translate(863,37)"><path d="M0,7h8l-4,4z" fill="#000"/></g>
<g transform="translate(1089,37)"><path d="M0,7h8l-4,4z" fill="#b0b0b0"/></g>
<g transform="translate(1243,37)"><path d="M0,7h8l-4,4z" fill="#000"/></g>
<rect x="992" y="37" width="1" height="17" fill="#a0a0a0"/><rect x="993" y="37" width="1" height="17" fill="#fff"/>
<rect x="1302" y="37" width="1" height="17" fill="#a0a0a0"/><rect x="1303" y="37" width="1" height="17" fill="#fff"/>
<rect x="1330" y="37" width="1" height="17" fill="#a0a0a0"/><rect x="1331" y="37" width="1" height="17" fill="#fff"/>
<rect x="1451" y="37" width="1" height="17" fill="#a0a0a0"/><rect x="1452" y="37" width="1" height="17" fill="#fff"/>
<rect x="1501" y="37" width="1" height="17" fill="#a0a0a0"/><rect x="1502" y="37" width="1" height="17" fill="#fff"/>
<rect x="1529" y="37" width="1" height="17" fill="#a0a0a0"/><rect x="1530" y="37" width="1" height="17" fill="#fff"/>
<rect x="1580" y="37" width="1" height="17" fill="#a0a0a0"/><rect x="1581" y="37" width="1" height="17" fill="#fff"/>
<g transform="translate(701,64)"><circle cx="6" cy="6" r="5" fill="#fff" stroke="#000" stroke-width="1.5"/><path d="M9.5,9.5l5,5" stroke="#000" stroke-width="2.2"/><path d="M3,6h6M6,3v6" stroke="#000" stroke-width="1.8"/></g>
<g transform="translate(724,64)"><circle cx="6" cy="6" r="5" fill="#fff" stroke="#000" stroke-width="1.5"/><path d="M9.5,9.5l5,5" stroke="#000" stroke-width="2.2"/><path d="M3,6h6" stroke="#000" stroke-width="1.8"/></g>
<g transform="translate(753,64)"><path d="M0,3h6l1,2h9v11H0z" fill="#c8c8c8" stroke="#a8a8a8"/><path d="M6,9h4v3H6z" fill="#a8a8a8"/></g>
<g transform="translate(780,64)"><circle cx="8" cy="8" r="6.5" fill="#d8d8d8" stroke="#b8b8b8" stroke-width="1.5"/><path d="M3,8h10M8,2v12M4,5h8M4,11h8" stroke="#a8a8a8"/></g>
<g transform="translate(803,64)"><path d="M1,1h13v4h-1.5l-1-2h-5v4h3l.5-1.5h1.5v5h-1.5l-.5-1.5h-3v4h2v2h-7.5v-2h2v-10h-2z" fill="#b0b0b0"/></g>
<rect x="747" y="63" width="1" height="17" fill="#a0a0a0"/><rect x="748" y="63" width="1" height="17" fill="#fff"/>
<rect x="774" y="63" width="1" height="17" fill="#a0a0a0"/><rect x="775" y="63" width="1" height="17" fill="#fff"/></svg>
<svg class="abs" style="left:0;top:0" width="1638" height="741" font-family="Liberation Sans"><defs><pattern id="chk2" width="2" height="2" patternUnits="userSpaceOnUse"><rect width="2" height="2" fill="#f6f6f6"/><rect width="1" height="1" fill="#ececec"/><rect x="1" y="1" width="1" height="1" fill="#ececec"/></pattern></defs><g transform="translate(10,10)"><rect x="0.5" y="0.5" width="15" height="15" fill="#fff" stroke="#000"/><rect x="1" y="1" width="14" height="3" fill="#0000ff"/><rect x="1" y="4" width="14" height="1" fill="#000"/><rect x="4" y="6" width="9" height="1" fill="#808080"/><rect x="4.5" y="7.5" width="9" height="6" fill="#00ffff" stroke="#000"/><path d="M5,12l3-3h3l2,3" fill="none" stroke="#000"/><rect x="2" y="8" width="1" height="1" fill="#808080"/><rect x="2" y="10" width="1" height="1" fill="#808080"/><rect x="2" y="12" width="1" height="1" fill="#808080"/></g>
<g transform="translate(697,10)"><rect x="0.5" y="0.5" width="15" height="15" fill="#d8d0c0" stroke="#000" stroke-width="1.2"/><path d="M5,2v12M5,12h8M11,2v10M2,5h12" stroke="#2060e0" stroke-width="1.2" fill="none"/><circle cx="3.5" cy="5" r="1.2" fill="#0000ff"/><circle cx="4" cy="9" r="1.2" fill="#0000ff"/><circle cx="9" cy="5" r="1.2" fill="#0000ff"/><circle cx="10" cy="9" r="1.2" fill="#0000ff"/><rect x="6" y="5" width="2" height="1.5" fill="#ff0000"/><rect x="12" y="3" width="2" height="1.5" fill="#ff0000"/><rect x="12" y="6" width="2" height="1.5" fill="#ff0000"/><rect x="12" y="9" width="2" height="1.5" fill="#ff0000"/><rect x="1" y="13" width="14" height="2" fill="#000"/><rect x="11" y="13.5" width="3" height="1" fill="#fff"/></g>
<text x="30" y="22.5" font-size="12" fill="#000">Distortion Analysis</text>
<text x="718" y="23" font-size="12" fill="#8c8c8c" letter-spacing="0.19">D:\MC9\DATA\MyAmps\diff2.cir</text>
<rect x="588.5" y="17.5" width="11" height="4" rx="1" fill="#fff" stroke="#3a3f4a" stroke-width="1"/>
<rect x="1542.5" y="17.5" width="11" height="4" rx="1" fill="#fff" stroke="#3a3f4a" stroke-width="1"/>
<rect x="623.5" y="13.5" width="10" height="8" rx="1" fill="#fff" stroke="#3a3f4a"/><rect x="625.5" y="15.5" width="5" height="2" fill="#8eaad0" stroke="#3a3f4a" stroke-width=".8"/>
<rect x="1577.5" y="13.5" width="10" height="8" rx="1" fill="#fff" stroke="#3a3f4a"/><rect x="1579.5" y="15.5" width="5" height="2" fill="#8eaad0" stroke="#3a3f4a" stroke-width=".8"/>
<path d="M658,13.5l8,7M666,13.5l-8,7" stroke="#3a3f4a" stroke-width="3.6" stroke-linecap="round"/><path d="M658,13.5l8,7M666,13.5l-8,7" stroke="#fff" stroke-width="2"/>
<path d="M1612,13.5l8,7M1620,13.5l-8,7" stroke="#3a3f4a" stroke-width="3.6" stroke-linecap="round"/><path d="M1612,13.5l8,7M1620,13.5l-8,7" stroke="#fff" stroke-width="2"/>
<rect x="10" y="720" width="668" height="18" fill="#f0f0f0"/>
<rect x="10" y="719" width="2" height="17" fill="#ffffff"/>
<rect x="14" y="719" width="83" height="16" fill="#808080"/>
<rect x="17" y="720" width="14" height="14" fill="#f0f0f0"/>
<rect x="17" y="720" width="13" height="1" fill="#fff"/>
<rect x="17" y="720" width="1" height="13" fill="#fff"/>
<rect x="33" y="720" width="14" height="14" fill="#f0f0f0"/>
<rect x="33" y="720" width="13" height="1" fill="#fff"/>
<rect x="33" y="720" width="1" height="13" fill="#fff"/>
<rect x="49" y="720" width="14" height="14" fill="#f0f0f0"/>
<rect x="49" y="720" width="13" height="1" fill="#fff"/>
<rect x="49" y="720" width="1" height="13" fill="#fff"/>
<rect x="65" y="720" width="14" height="14" fill="#f0f0f0"/>
<rect x="65" y="720" width="13" height="1" fill="#fff"/>
<rect x="65" y="720" width="1" height="13" fill="#fff"/>
<rect x="81" y="720" width="14" height="14" fill="#f0f0f0"/>
<rect x="81" y="720" width="13" height="1" fill="#fff"/>
<rect x="81" y="720" width="1" height="13" fill="#fff"/>
<g transform="translate(24,727.5)"><path d="M-3,-1h6l-3,3z" fill="#000"/></g>
<g transform="translate(40,727.5)"><path d="M-4,-4v8M3,-4v8l-6-4z" stroke="#000" fill="#000"/></g>
<g transform="translate(56,727.5)"><path d="M2,-4v8l-5-4z" fill="#000"/></g>
<g transform="translate(72,727.5)"><path d="M-2,-4v8l5-4z" fill="#000"/></g>
<g transform="translate(88,727.5)"><path d="M-3,-4v8l6-4zM4,-4v8" stroke="#000" fill="#000"/></g>
<rect x="97" y="734" width="44" height="1" fill="#e0e0e0"/>
<path d="M97,719 L105,734.5 H134 L141,719 Z" fill="#fff"/>
<path d="M97.5,719 L105,734.5 M141,719 L133.5,734.5 M141,719.5 H661" fill="none" stroke="#000"/>
<text x="106" y="731.5" font-size="11.5" font-weight="bold" fill="#000">Main</text>
<rect x="661" y="719" width="17" height="7" fill="#f0f0f0"/>
<path d="M661.5,725.5h16v-6" fill="none" stroke="#808080" stroke-width="1.5"/><path d="M661.5,725v-6h16" fill="none" stroke="#fff"/>
<rect x="697" y="719" width="927" height="17" fill="#f0f0f0"/>
<rect x="699" y="719" width="67" height="16" fill="#808080"/>
<rect x="701" y="720" width="15" height="14" fill="#f0f0f0"/>
<rect x="701" y="720" width="14" height="1" fill="#fff"/>
<rect x="701" y="720" width="1" height="13" fill="#fff"/>
<rect x="717" y="720" width="15" height="14" fill="#f0f0f0"/>
<rect x="717" y="720" width="14" height="1" fill="#fff"/>
<rect x="717" y="720" width="1" height="13" fill="#fff"/>
<rect x="733" y="720" width="15" height="14" fill="#f0f0f0"/>
<rect x="733" y="720" width="14" height="1" fill="#fff"/>
<rect x="733" y="720" width="1" height="13" fill="#fff"/>
<rect x="749" y="720" width="15" height="14" fill="#f0f0f0"/>
<rect x="749" y="720" width="14" height="1" fill="#fff"/>
<rect x="749" y="720" width="1" height="13" fill="#fff"/>
<g transform="translate(709,727.5)"><path d="M-4,-4v8M3,-4v8l-6-4z" stroke="#000" fill="#000"/></g>
<g transform="translate(725,727.5)"><path d="M2,-4v8l-5-4z" fill="#000"/></g>
<g transform="translate(741,727.5)"><path d="M-2,-4v8l5-4z" fill="#000"/></g>
<g transform="translate(757,727.5)"><path d="M-3,-4v8l6-4zM4,-4v8" stroke="#000" fill="#000"/></g>
<rect x="699" y="734" width="424" height="1" fill="#808080"/>
<path d="M766,719 L774,734.5 H803 L810,719 Z" fill="#fff"/>
<path d="M810,719.5H1123" stroke="#000"/>
<path d="M766.5,719 L774,734.5 M810.5,719 L803,734.5 M806.5,727 L810.5,734.5 M843,719 L836,734.5 M836,719 L843,734.5 M892,719 L885,734.5 M885,719 L892,734.5 M923.5,719 L916,734.5" fill="none" stroke="#000"/>
<text x="775" y="731" font-size="11.5" font-weight="bold" fill="#000">Main</text>
<text x="812" y="731" font-size="11.5" fill="#000" letter-spacing="-.2">Text</text>
<text x="847" y="731" font-size="11.5" fill="#000" letter-spacing="-.3">Models</text>
<text x="895" y="731" font-size="11.5" fill="#000" letter-spacing="-.2">Info</text>
<rect x="1123" y="719" width="1" height="17" fill="#000"/>
<rect x="1125" y="719" width="1" height="17" fill="#000"/>
<rect x="1127" y="720" width="489" height="15" fill="url(#chk2)"/>
<rect x="1128" y="720" width="15" height="15" fill="#f0f0f0"/>
<path d="M1128.5,734.5v-14h14" fill="none" stroke="#fff"/><path d="M1128.5,734.5h14v-14" fill="none" stroke="#808080"/><path d="M1138,723v8l-4-4z" fill="#000"/>
<rect x="1196" y="720" width="151" height="15" fill="#f0f0f0"/>
<path d="M1196.5,734.5v-14h150" fill="none" stroke="#fff"/><path d="M1196.5,734.5h150v-14" fill="none" stroke="#808080"/>
<rect x="1600" y="720" width="16" height="15" fill="#f0f0f0"/>
<path d="M1600.5,734.5v-14h15" fill="none" stroke="#fff"/><path d="M1600.5,734.5h15v-14" fill="none" stroke="#808080"/><path d="M1606,723v8l4-4z" fill="#000"/>
<rect x="1616" y="719" width="17" height="17" fill="#f0f0f0"/>
<path d="M1616.5,735.5v-16h16" fill="none" stroke="#808080"/>
<rect x="1616" y="89" width="16" height="630" fill="url(#chk2)"/>
<rect x="1616" y="92" width="16" height="19" fill="#f0f0f0"/>
<path d="M1616,92.5h16" stroke="#808080" stroke-width="2"/><path d="M1616.5,110.5h15v-17" fill="none" stroke="#808080"/><path d="M1620,102h8l-4-4z" fill="#000"/>
<rect x="1616" y="155" width="16" height="156" fill="#f0f0f0"/>
<path d="M1616.5,310.5v-155h15" fill="none" stroke="#fff"/><path d="M1616.5,310.5h15v-155" fill="none" stroke="#808080"/>
<rect x="1616" y="701" width="16" height="18" fill="#f0f0f0"/>
<path d="M1616.5,718.5v-17h15" fill="none" stroke="#fff"/><path d="M1616.5,718.5h15v-17" fill="none" stroke="#808080"/><path d="M1620,707h8l-4,4z" fill="#000"/></svg>
</body></html>
